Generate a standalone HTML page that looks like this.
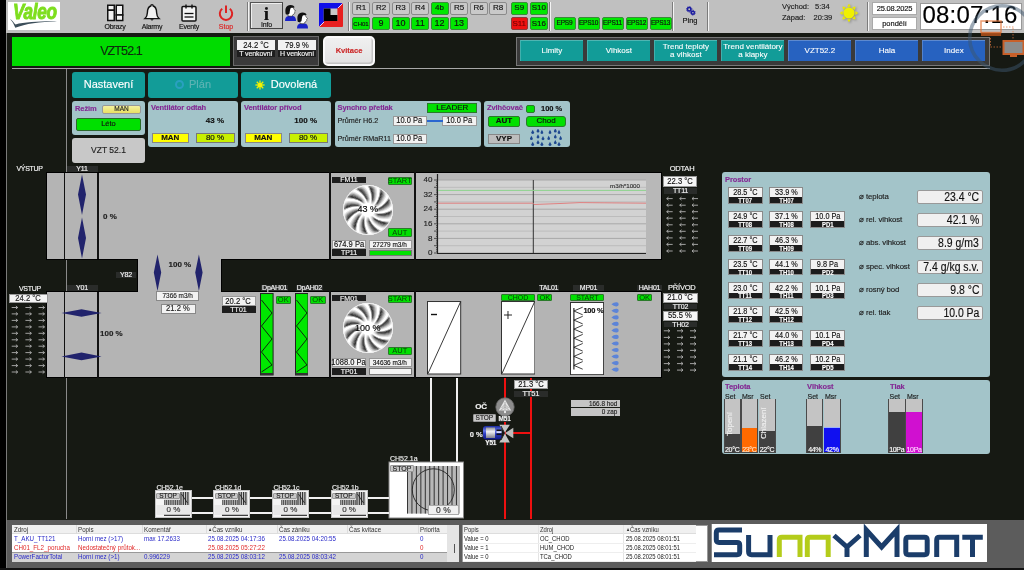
<!DOCTYPE html><html><head><meta charset="utf-8"><style>
*{margin:0;padding:0;box-sizing:border-box}
html,body{width:1024px;height:570px;overflow:hidden;background:#161913;font-family:"Liberation Sans",sans-serif}
.a{position:absolute}
#w{position:absolute;left:0;top:0;width:1024px;height:570px;will-change:transform}
.t,.c,.r{-webkit-text-stroke:0.15px currentColor}
.t{position:absolute;white-space:nowrap;line-height:1}
.c{display:flex;align-items:center;justify-content:center;white-space:nowrap;line-height:1}
.r{display:flex;align-items:center;justify-content:flex-end;white-space:nowrap;line-height:1}
.btn{background:#c9c9c9;border:1px solid #8a8a8a;border-radius:2px;font-size:8px;color:#111}
.gbtn{background:#00e800;border:1px solid #3a8a3a;border-radius:2px;font-size:8px;color:#111}
.rbtn{background:#ee1111;border:1px solid #8a3a3a;border-radius:2px;font-size:8px;color:#700}
.sep{background:#7c7c7c;border-right:1px solid #f4f4f4}
.teal{background:#129c98;border-radius:3px;color:#fff}
.blue{background:#2762c0;color:#fff}
.pnl{background:#a3c4c9;border-radius:3px}
.ptit{color:#842a94;font-weight:bold;font-size:7.5px;letter-spacing:-0.1px}
.val{background:#f2f2f2;border:1px solid #999;color:#111;font-size:7.8px}
.lab{background:#1e1e1e;color:#f4f4f4;font-size:7px}
.dlab{background:#2a2c2a;color:#e8e8e8;font-size:8px}
.ok{background:#00e000;border:1px solid #2a7a2a;border-radius:1px;color:#0a3a0a;font-size:7.5px;-webkit-text-stroke:0 !important}
.duct{background:#b4b4b4}
</style></head><body><div id="w"><div class="a " style="left:0px;top:0px;width:6px;height:570px;background:#000"></div>
<div class="a " style="left:6px;top:33px;width:1px;height:537px;background:#7a7a7a"></div>
<div class="a " style="left:6px;top:0px;width:1018px;height:32.6px;background:#c0c0c0"></div>
<div class="a " style="left:8px;top:2px;width:52px;height:28px;background:#fff"></div>
<div class="t " style="left:12.5px;top:0.5px;font-size:22px;font-weight:bold;font-style:italic;color:#7ede1e;letter-spacing:-0.4px;transform:scaleX(0.78);transform-origin:0 0;-webkit-text-stroke:1px #7ede1e">Valeo</div>
<svg class="a" style="left:8px;top:2px;" width="52" height="28" viewBox="0 0 52 28"><path d="M2 17 C4 18 6 21 7.5 22.5 C17 20 32 19.2 49 19.4 C32 19.8 17 21.5 7.3 25.8 C6 22.5 4.5 19.5 2 17Z" fill="#3c4e5a"/></svg>
<svg class="a" style="left:106px;top:4px;" width="19" height="18" viewBox="0 0 19 18"><g fill="#f2f2f2" stroke="#111" stroke-width="1.5"><rect x="1.75" y="1.25" width="6.5" height="5"/><rect x="1.75" y="6.25" width="6.5" height="10.25"/><rect x="10.25" y="1.25" width="6.5" height="9.75"/><rect x="10.25" y="11" width="6.5" height="5.5"/></g></svg>
<div class="t " style="left:102px;top:22.5px;font-size:7px;color:#111;width:26px;text-align:center;letter-spacing:-0.25px">Obrazy</div>
<svg class="a" style="left:143px;top:3px;" width="18" height="19" viewBox="0 0 18 19"><path d="M9 1.6 C9.9 1.6 10.2 2.2 10.2 3 C12.8 3.8 13.5 6.5 13.6 9.5 C13.7 12.5 14.5 14.3 16 15.6 L2 15.6 C3.5 14.3 4.3 12.5 4.4 9.5 C4.5 6.5 5.2 3.8 7.8 3 C7.8 2.2 8.1 1.6 9 1.6Z" fill="#f0f0f0" stroke="#111" stroke-width="1.4"/><path d="M7.3 16.3 Q9 18.8 10.7 16.3" fill="#111"/></svg>
<div class="t " style="left:139px;top:22.5px;font-size:7px;color:#111;width:26px;text-align:center;letter-spacing:-0.25px">Alarmy</div>
<svg class="a" style="left:180px;top:4px;" width="18" height="18" viewBox="0 0 18 18"><rect x="2" y="2.5" width="14" height="14.5" rx="1" fill="#f4f4f4" stroke="#111" stroke-width="1.5"/><line x1="6" y1="0.5" x2="6" y2="4.5" stroke="#111" stroke-width="1.4"/><line x1="12" y1="0.5" x2="12" y2="4.5" stroke="#111" stroke-width="1.4"/><line x1="4.5" y1="9.5" x2="13.5" y2="9.5" stroke="#111" stroke-width="1.3"/><line x1="4.5" y1="13" x2="13.5" y2="13" stroke="#111" stroke-width="1.3"/></svg>
<div class="t " style="left:176px;top:22.5px;font-size:7px;color:#111;width:26px;text-align:center;letter-spacing:-0.25px">Eventy</div>
<svg class="a" style="left:218px;top:5px;" width="16" height="16" viewBox="0 0 16 16"><path d="M4.2 3.8 A6.2 6.2 0 1 0 11.8 3.8" fill="none" stroke="#dd2222" stroke-width="2"/><line x1="8" y1="0.5" x2="8" y2="8" stroke="#dd2222" stroke-width="2"/></svg>
<div class="t " style="left:213px;top:22.5px;font-size:7px;color:#dd2222;width:26px;text-align:center">Stop</div>
<div class="a sep" style="left:246.5px;top:2px;width:2px;height:28.5px;"></div>
<div class="a sep" style="left:347.8px;top:2px;width:2px;height:28.5px;"></div>
<div class="a sep" style="left:549px;top:2px;width:2px;height:28.5px;"></div>
<div class="a sep" style="left:672px;top:2px;width:2px;height:28.5px;"></div>
<div class="a sep" style="left:707.3px;top:2px;width:2px;height:28.5px;"></div>
<div class="a sep" style="left:867px;top:2px;width:2px;height:28.5px;"></div>
<div class="a " style="left:250px;top:2px;width:33px;height:27px;background:#c6c6c6;border:1px solid #555;border-right-color:#444;border-bottom-color:#444;box-shadow:inset 1px 1px 0 #eee"></div>
<div class="t " style="left:250px;top:4px;font-size:19px;font-weight:bold;color:#111;width:33px;text-align:center;font-family:'Liberation Serif',serif">i</div>
<div class="t " style="left:250px;top:21.3px;font-size:7px;color:#111;width:33px;text-align:center;letter-spacing:-0.2px">Info</div>
<svg class="a" style="left:284px;top:2px;" width="28" height="28" viewBox="0 0 28 28"><g transform="translate(0.5,2.5)"><path d="M0.5 16.5 C0.5 13.5 1.5 12 4 11.5 L8.5 11.5 C10.5 12 11.5 13.5 11.5 16.5Z" fill="#1a22c8"/><path d="M3.5 11.5 L3.5 8 C2.5 7 2.5 4 3.5 3 L8.5 2.5 C9 4 9.5 5 11 6.5 L10.2 7.2 C10.5 8.5 10 9.8 8.5 10 L7.5 11.8Z" fill="#fff" stroke="#222" stroke-width="0.6"/><path d="M1.2 9.5 C0.2 4 1.5 0.5 6 0.5 C8.5 0.5 10 1.5 10 3 L6.5 3.3 C5.5 4.5 5.5 6 5 9 C4 10 2 10.5 1.2 9.5Z" fill="#111"/></g><g transform="translate(12.5,10)"><path d="M0.5 16.5 C0.5 13.5 1.5 12 4 11.5 L8.5 11.5 C10.5 12 11.5 13.5 11.5 16.5Z" fill="#1a22c8"/><path d="M3.5 11.5 L3.5 8 C2.5 7 2.5 4 3.5 3 L8.5 2.5 C9 4 9.5 5 11 6.5 L10.2 7.2 C10.5 8.5 10 9.8 8.5 10 L7.5 11.8Z" fill="#fff" stroke="#222" stroke-width="0.6"/><path d="M1.2 9.5 C0.2 4 1.5 0.5 6 0.5 C8.5 0.5 10 1.5 10 3 L6.5 3.3 C5.5 4.5 5.5 6 5 9 C4 10 2 10.5 1.2 9.5Z" fill="#111"/></g></svg>
<svg class="a" style="left:318px;top:2px;" width="26" height="26" viewBox="0 0 26 26"><path d="M2 1 L24 1 Q25 1 25 2 L25 24 Q25 25 24 25 L2 25 Q1 25 1 24 L1 2 Q1 1 2 1Z" fill="#e82020"/><path d="M2 1 L24.5 1 L1 24.5 L1 2 Q1 1 2 1Z" fill="#1010e8"/><path d="M24.5 1.5 L20 6 M1.5 24.5 L6 20" stroke="#d8d8ff" stroke-width="1"/><rect x="5.7" y="6.5" width="13.7" height="12.5" fill="#c8c8c8"/><path d="M5.7 6.5 L12.5 6.5 L12.5 13 L19.4 13 L19.4 19 L5.7 19Z" fill="#000"/></svg>
<div class="a c btn" style="left:352px;top:2px;width:18px;height:12.5px;">R1</div>
<div class="a c btn" style="left:372px;top:2px;width:18px;height:12.5px;">R2</div>
<div class="a c btn" style="left:391.5px;top:2px;width:18px;height:12.5px;">R3</div>
<div class="a c btn" style="left:411px;top:2px;width:18px;height:12.5px;">R4</div>
<div class="a c gbtn" style="left:430.5px;top:2px;width:18px;height:12.5px;">4b</div>
<div class="a c btn" style="left:450px;top:2px;width:18px;height:12.5px;">R5</div>
<div class="a c btn" style="left:469.5px;top:2px;width:18px;height:12.5px;">R6</div>
<div class="a c btn" style="left:489px;top:2px;width:18px;height:12.5px;">R8</div>
<div class="a c gbtn" style="left:352px;top:17px;width:18px;height:13px;font-size:6px">CH01</div>
<div class="a c gbtn" style="left:372px;top:17px;width:18px;height:13px;font-size:9px">9</div>
<div class="a c gbtn" style="left:391.5px;top:17px;width:18px;height:13px;font-size:9px">10</div>
<div class="a c gbtn" style="left:411px;top:17px;width:18px;height:13px;font-size:9px">11</div>
<div class="a c gbtn" style="left:430.5px;top:17px;width:18px;height:13px;font-size:9px">12</div>
<div class="a c gbtn" style="left:450px;top:17px;width:18px;height:13px;font-size:9px">13</div>
<div class="a c gbtn" style="left:510.5px;top:2px;width:17.5px;height:12.5px;">S9</div>
<div class="a c gbtn" style="left:530px;top:2px;width:17.5px;height:12.5px;">S10</div>
<div class="a c rbtn" style="left:510.5px;top:17px;width:17.5px;height:13px;">S11</div>
<div class="a c gbtn" style="left:530px;top:17px;width:17.5px;height:13px;">S16</div>
<div class="a c gbtn" style="left:553.5px;top:17px;width:22px;height:13px;font-size:6.5px;letter-spacing:-0.2px">EPS9</div>
<div class="a c gbtn" style="left:577.5px;top:17px;width:22px;height:13px;font-size:6.5px;letter-spacing:-0.2px">EPS10</div>
<div class="a c gbtn" style="left:601.5px;top:17px;width:22px;height:13px;font-size:6.5px;letter-spacing:-0.2px">EPS11</div>
<div class="a c gbtn" style="left:625.5px;top:17px;width:22px;height:13px;font-size:6.5px;letter-spacing:-0.2px">EPS12</div>
<div class="a c gbtn" style="left:649.5px;top:17px;width:22px;height:13px;font-size:6.5px;letter-spacing:-0.2px">EPS13</div>
<svg class="a" style="left:684px;top:5px;" width="12" height="12" viewBox="0 0 12 12"><g fill="none" stroke="#1a1aa0"><circle cx="5.2" cy="4.3" r="1.7" stroke-width="1.5"/><circle cx="5.2" cy="4.3" r="2.7" stroke-width="0.9" stroke-dasharray="1 0.7"/><circle cx="8.9" cy="7.7" r="1.5" stroke-width="1.4"/><circle cx="8.9" cy="7.7" r="2.4" stroke-width="0.8" stroke-dasharray="1 0.7"/></g></svg>
<div class="t " style="left:678px;top:16.8px;font-size:7.5px;color:#111;width:24px;text-align:center">Ping</div>
<div class="t " style="left:782px;top:3px;font-size:7.5px;color:#222">Východ:</div>
<div class="t " style="left:815px;top:3px;font-size:7.5px;color:#222">5:34</div>
<div class="t " style="left:782px;top:13.5px;font-size:7.5px;color:#222">Západ:</div>
<div class="t " style="left:813.5px;top:13.5px;font-size:7.5px;color:#222">20:39</div>
<svg class="a" style="left:838.75px;top:3.3px;filter:drop-shadow(1px 1px 1px rgba(0,0,0,0.3))" width="20" height="20" viewBox="0 0 20 20"><path d="M19.30 10.00 L16.31 11.95 L16.31 8.05Z" fill="#e8e800"/><path d="M16.58 16.58 L13.08 15.84 L15.84 13.08Z" fill="#e8e800"/><path d="M10.00 19.30 L8.05 16.31 L11.95 16.31Z" fill="#e8e800"/><path d="M3.42 16.58 L4.16 13.08 L6.92 15.84Z" fill="#e8e800"/><path d="M0.70 10.00 L3.69 8.05 L3.69 11.95Z" fill="#e8e800"/><path d="M3.42 3.42 L6.92 4.16 L4.16 6.92Z" fill="#e8e800"/><path d="M10.00 0.70 L11.95 3.69 L8.05 3.69Z" fill="#e8e800"/><path d="M16.58 3.42 L15.84 6.92 L13.08 4.16Z" fill="#e8e800"/><circle cx="10" cy="10" r="5.6" fill="#f0f000"/></svg>
<div class="a c" style="left:872px;top:2px;width:45px;height:12.5px;background:#fff;border:1px solid #aaa;font-size:7.5px;color:#111;letter-spacing:-0.2px">25.08.2025</div>
<div class="a c" style="left:872px;top:17px;width:45px;height:13px;background:#fff;border:1px solid #aaa;font-size:7.5px;color:#111">pondělí</div>
<div class="a " style="left:919.5px;top:2.5px;width:102px;height:27.5px;background:#fff;border:1px solid #999"></div>
<div class="t " style="left:921px;top:2.8px;font-size:24px;color:#000;width:98px;text-align:center;letter-spacing:0.2px">08:07:16</div>
<div class="a c" style="left:12px;top:37px;width:218px;height:29px;background:#00dc00;font-size:12.5px;color:#0e2a0e;letter-spacing:-0.9px">VZT52.1</div>
<div class="a " style="left:232.5px;top:36px;width:86.5px;height:29.5px;background:#3a3a3a;border:1px solid #6a6a6a"></div>
<div class="a c" style="left:236.5px;top:40px;width:38.5px;height:10px;background:#f2f2f2;font-size:9px;color:#111"><span style="display:inline-block;transform:scaleX(0.85);transform-origin:50% 50%">24.2 °C</span></div>
<div class="a c" style="left:236.5px;top:50px;width:38.5px;height:7px;background:#1e1e1e;font-size:7px;color:#f4f4f4;letter-spacing:-0.1px">T venkovní</div>
<div class="a c" style="left:278px;top:40px;width:38px;height:10px;background:#f2f2f2;font-size:9px;color:#111"><span style="display:inline-block;transform:scaleX(0.85);transform-origin:50% 50%">79.9 %</span></div>
<div class="a c" style="left:278px;top:50px;width:38px;height:7px;background:#1e1e1e;font-size:7px;color:#f4f4f4;letter-spacing:-0.1px">H venkovní</div>
<div class="a c" style="left:323px;top:36px;width:52px;height:29.5px;background:linear-gradient(#f0f0f0,#e2e2e2);border-radius:5px;border:2px solid #fafafa;box-shadow:inset -1.5px -1.5px 0 #c4c4c4;font-size:7.5px;font-weight:bold;color:#cc2828">Kvitace</div>
<div class="a " style="left:516px;top:36.5px;width:473.5px;height:29px;background:#3a3a3a;border:1px solid #777"></div>
<div class="a c" style="left:520px;top:40px;width:62.8px;height:21px;background:#129c98;border-top:1px solid rgba(255,255,255,0.25);border-left:1px solid rgba(255,255,255,0.2);font-size:8px;color:#fff;text-align:center;line-height:8.3px;-webkit-text-stroke:0.1px #fff">Limity</div>
<div class="a c" style="left:587px;top:40px;width:62.8px;height:21px;background:#129c98;border-top:1px solid rgba(255,255,255,0.25);border-left:1px solid rgba(255,255,255,0.2);font-size:8px;color:#fff;text-align:center;line-height:8.3px;-webkit-text-stroke:0.1px #fff">Vlhkost</div>
<div class="a c" style="left:654px;top:40px;width:62.8px;height:21px;background:#129c98;border-top:1px solid rgba(255,255,255,0.25);border-left:1px solid rgba(255,255,255,0.2);font-size:8px;color:#fff;text-align:center;line-height:8.3px;-webkit-text-stroke:0.1px #fff">Trend teploty<br>a vlhkost</div>
<div class="a c" style="left:721px;top:40px;width:62.8px;height:21px;background:#129c98;border-top:1px solid rgba(255,255,255,0.25);border-left:1px solid rgba(255,255,255,0.2);font-size:8px;color:#fff;text-align:center;line-height:8.3px;-webkit-text-stroke:0.1px #fff">Trend ventilátory<br>a klapky</div>
<div class="a c" style="left:788px;top:40px;width:62.8px;height:21px;background:#2762c0;border-top:1px solid rgba(255,255,255,0.25);border-left:1px solid rgba(255,255,255,0.2);font-size:8px;color:#fff;text-align:center;line-height:8.3px;-webkit-text-stroke:0.1px #fff">VZT52.2</div>
<div class="a c" style="left:855px;top:40px;width:62.8px;height:21px;background:#2762c0;border-top:1px solid rgba(255,255,255,0.25);border-left:1px solid rgba(255,255,255,0.2);font-size:8px;color:#fff;text-align:center;line-height:8.3px;-webkit-text-stroke:0.1px #fff">Hala</div>
<div class="a c" style="left:922px;top:40px;width:62.8px;height:21px;background:#2762c0;border-top:1px solid rgba(255,255,255,0.25);border-left:1px solid rgba(255,255,255,0.2);font-size:8px;color:#fff;text-align:center;line-height:8.3px;-webkit-text-stroke:0.1px #fff">Index</div>
<div class="a " style="left:12px;top:67.8px;width:978px;height:1.2px;background:#a8a8a8"></div>
<div class="a " style="left:66px;top:69px;width:1px;height:450px;background:#8a8a8a"></div>
<div class="a c teal" style="left:72px;top:72px;width:73px;height:25.5px;font-size:11px">Nastavení</div>
<div class="a c teal" style="left:148px;top:72px;width:90px;height:25.5px;font-size:11px"><span style="display:inline-block;width:9px;height:9px;border:2px solid #2aa0c0;border-radius:50%;margin-right:5px"></span><span style="color:#5fb4b4">Plán</span></div>
<div class="a c teal" style="left:241px;top:72px;width:90px;height:25.5px;font-size:11px"><svg width="10" height="10" style="margin-right:6px"><line x1="7.50" y1="5.00" x2="9.60" y2="5.00" stroke="#eaf000" stroke-width="1.3"/><line x1="6.77" y1="6.77" x2="8.25" y2="8.25" stroke="#eaf000" stroke-width="1.3"/><line x1="5.00" y1="7.50" x2="5.00" y2="9.60" stroke="#eaf000" stroke-width="1.3"/><line x1="3.23" y1="6.77" x2="1.75" y2="8.25" stroke="#eaf000" stroke-width="1.3"/><line x1="2.50" y1="5.00" x2="0.40" y2="5.00" stroke="#eaf000" stroke-width="1.3"/><line x1="3.23" y1="3.23" x2="1.75" y2="1.75" stroke="#eaf000" stroke-width="1.3"/><line x1="5.00" y1="2.50" x2="5.00" y2="0.40" stroke="#eaf000" stroke-width="1.3"/><line x1="6.77" y1="3.23" x2="8.25" y2="1.75" stroke="#eaf000" stroke-width="1.3"/><circle cx="5" cy="5" r="2.6" fill="#f4f400"/></svg>Dovolená</div>
<div class="a pnl" style="left:72px;top:101px;width:73px;height:33.5px;"></div>
<div class="t ptit" style="left:75px;top:104.5px;">Režim</div>
<div class="a c" style="left:102px;top:105.4px;width:39px;height:8.2px;background:linear-gradient(#f6f2a0,#e8e060);border:1px solid #999;border-radius:2px;font-size:6.5px;color:#222">MAN</div>
<div class="a c" style="left:76px;top:117.5px;width:65px;height:13px;background:#00e000;border:1px solid #2a6a2a;border-radius:2px;font-size:7.5px;color:#111">Léto</div>
<div class="a c" style="left:72px;top:138px;width:73px;height:24.5px;background:#c8c8c8;border-radius:3px;font-size:8.5px;color:#222">VZT 52.1</div>
<div class="a pnl" style="left:148px;top:101px;width:90px;height:46px;"></div>
<div class="t ptit" style="left:151px;top:104px;">Ventilátor odtah</div>
<div class="a r" style="left:188px;top:116px;width:36px;height:10px;font-size:8px;font-weight:bold;color:#111">43 %</div>
<div class="a c" style="left:152px;top:133px;width:36.5px;height:10px;background:#ffff00;border:1px solid #888;font-size:8px;font-weight:bold;color:#111">MAN</div>
<div class="a c" style="left:195.5px;top:133px;width:39px;height:10px;background:#c8f000;border:1px solid #777;font-size:8px;color:#111">80 %</div>
<div class="a pnl" style="left:241px;top:101px;width:90px;height:46px;"></div>
<div class="t ptit" style="left:244px;top:104px;">Ventilátor přívod</div>
<div class="a r" style="left:281px;top:116px;width:36px;height:10px;font-size:8px;font-weight:bold;color:#111">100 %</div>
<div class="a c" style="left:245px;top:133px;width:36.5px;height:10px;background:#ffff00;border:1px solid #888;font-size:8px;font-weight:bold;color:#111">MAN</div>
<div class="a c" style="left:288.5px;top:133px;width:39px;height:10px;background:#c8f000;border:1px solid #777;font-size:8px;color:#111">80 %</div>
<div class="a pnl" style="left:335px;top:101px;width:145.5px;height:46px;"></div>
<div class="t ptit" style="left:337.5px;top:103.5px;">Synchro přetlak</div>
<div class="a c" style="left:427.3px;top:102.8px;width:50px;height:10.7px;background:#00e000;border:1px solid #2a7a2a;font-size:8px;color:#111">LEADER</div>
<div class="t " style="left:337.5px;top:117.3px;font-size:7.2px;color:#222">Průměr H6.2</div>
<div class="t " style="left:337.5px;top:134.8px;font-size:7.2px;color:#222">Průměr RMaR11</div>
<div class="a c val" style="left:392.6px;top:115.5px;width:34px;height:10.7px;font-size:8.8px"><span style="display:inline-block;transform:scaleX(0.85);transform-origin:50% 50%">10.0 Pa</span></div>
<div class="a c val" style="left:442.4px;top:115.5px;width:34.3px;height:10.7px;font-size:8.8px"><span style="display:inline-block;transform:scaleX(0.85);transform-origin:50% 50%">10.0 Pa</span></div>
<div class="a " style="left:426.5px;top:119.5px;width:16px;height:2.5px;background:#2a66d0"></div>
<div class="a c val" style="left:392.6px;top:133.5px;width:34px;height:10px;font-size:8.8px"><span style="display:inline-block;transform:scaleX(0.85);transform-origin:50% 50%">10.0 Pa</span></div>
<div class="a pnl" style="left:484px;top:101px;width:85.5px;height:46px;"></div>
<div class="t ptit" style="left:487px;top:103.5px;">Zvlhčovač</div>
<div class="a " style="left:526.4px;top:104.8px;width:9px;height:8.7px;background:#00e000;border:1px solid #2a7a2a;border-radius:2px"></div>
<div class="t " style="left:541px;top:105px;font-size:7.5px;font-weight:bold;color:#111">100 %</div>
<div class="a c" style="left:488px;top:115.5px;width:32px;height:11px;background:#00e000;border:1px solid #2a7a2a;border-radius:2px;font-size:8px;font-weight:bold;color:#111">AUT</div>
<div class="a c" style="left:526.4px;top:115.5px;width:39.5px;height:11px;background:#00e000;border:1px solid #2a7a2a;border-radius:3px;font-size:8px;color:#111">Chod</div>
<div class="a c" style="left:488px;top:133.7px;width:32px;height:10px;background:#bdbdbd;border:1px solid #888;font-size:8px;font-weight:bold;color:#111">VYP</div>
<svg class="a" style="left:530px;top:129px;" width="33" height="18" viewBox="0 0 33 18"><path d="M2.7 0.7999999999999998 L1.4000000000000001 3.3 A1.35 1.35 0 1 0 4.0 3.3Z" fill="#1e4890"/><path d="M8 -0.7000000000000002 L6.7 1.8 A1.35 1.35 0 1 0 9.3 1.8Z" fill="#1e4890"/><path d="M11.9 0.7999999999999998 L10.6 3.3 A1.35 1.35 0 1 0 13.200000000000001 3.3Z" fill="#1e4890"/><path d="M1.4 6.8 L0.09999999999999987 9.3 A1.35 1.35 0 1 0 2.7 9.3Z" fill="#1e4890"/><path d="M8 5.2 L6.7 7.7 A1.35 1.35 0 1 0 9.3 7.7Z" fill="#1e4890"/><path d="M13 6.999999999999999 L11.7 9.5 A1.35 1.35 0 1 0 14.3 9.5Z" fill="#1e4890"/><path d="M2.7 12.7 L1.4000000000000001 15.200000000000001 A1.35 1.35 0 1 0 4.0 15.200000000000001Z" fill="#1e4890"/><path d="M8 10.899999999999999 L6.7 13.4 A1.35 1.35 0 1 0 9.3 13.4Z" fill="#1e4890"/><path d="M11.9 12.7 L10.6 15.200000000000001 A1.35 1.35 0 1 0 13.200000000000001 15.200000000000001Z" fill="#1e4890"/><path d="M20 0.7999999999999998 L18.7 3.3 A1.35 1.35 0 1 0 21.3 3.3Z" fill="#1e4890"/><path d="M25.3 -0.7000000000000002 L24.0 1.8 A1.35 1.35 0 1 0 26.6 1.8Z" fill="#1e4890"/><path d="M29 0.7999999999999998 L27.7 3.3 A1.35 1.35 0 1 0 30.3 3.3Z" fill="#1e4890"/><path d="M18.7 6.8 L17.4 9.3 A1.35 1.35 0 1 0 20.0 9.3Z" fill="#1e4890"/><path d="M25.3 5.2 L24.0 7.7 A1.35 1.35 0 1 0 26.6 7.7Z" fill="#1e4890"/><path d="M30.6 6.8 L29.3 9.3 A1.35 1.35 0 1 0 31.900000000000002 9.3Z" fill="#1e4890"/><path d="M20 12.7 L18.7 15.200000000000001 A1.35 1.35 0 1 0 21.3 15.200000000000001Z" fill="#1e4890"/><path d="M25.3 10.899999999999999 L24.0 13.4 A1.35 1.35 0 1 0 26.6 13.4Z" fill="#1e4890"/><path d="M29 12.7 L27.7 15.200000000000001 A1.35 1.35 0 1 0 30.3 15.200000000000001Z" fill="#1e4890"/></svg>
<div class="a " style="left:45.5px;top:172px;width:616.5px;height:88px;background:#b4b4b4;border:1px solid #000"></div>
<div class="a " style="left:45.5px;top:290.5px;width:616.5px;height:87.5px;background:#b4b4b4;border:1px solid #000"></div>
<div class="a " style="left:137px;top:258px;width:84px;height:34px;background:#b4b4b4"></div>
<div class="a " style="left:45.5px;top:258.5px;width:92.5px;height:33px;border:1px solid #000;border-left:none"></div>
<div class="a " style="left:220.5px;top:258.5px;width:441.5px;height:33px;border:1px solid #000;border-right:none"></div>
<div class="t " style="left:16.5px;top:165.3px;font-size:7px;color:#f4f4f4;letter-spacing:-0.3px">VÝSTUP</div>
<div class="a c" style="left:66.5px;top:165.5px;width:31px;height:6px;background:#2a2c2a;color:#f4f4f4;font-size:7px;letter-spacing:-0.2px;">Y11</div>
<div class="t " style="left:19px;top:284.5px;font-size:7px;color:#f4f4f4;letter-spacing:-0.3px">VSTUP</div>
<div class="a c" style="left:66.5px;top:284.5px;width:31px;height:6px;background:#2a2c2a;color:#f4f4f4;font-size:7px;letter-spacing:-0.2px;">Y01</div>
<div class="a c" style="left:116px;top:271.5px;width:20px;height:6px;background:#2a2c2a;color:#f4f4f4;font-size:7px;letter-spacing:-0.2px;">Y82</div>
<div class="a " style="left:63.7px;top:173px;width:1.6px;height:86px;background:#111"></div>
<div class="a " style="left:97.2px;top:173px;width:1.6px;height:86px;background:#111"></div>
<div class="a " style="left:63.7px;top:291.5px;width:1.6px;height:86px;background:#111"></div>
<div class="a " style="left:97.2px;top:291.5px;width:1.6px;height:86px;background:#111"></div>
<svg class="a" style="left:77px;top:173.5px;" width="10" height="85" viewBox="0 0 10 85"><path d="M5 0.5 L9 20.5 L5 41 L1 20.5Z M5 43.5 L9 64 L5 84.5 L1 64Z" fill="#21236c"/></svg>
<div class="t " style="left:103px;top:213px;font-size:8px;font-weight:bold;color:#222">0 %</div>
<svg class="a" style="left:61px;top:308px;" width="41" height="53" viewBox="0 0 41 53"><path d="M0.5 5 L20.5 1.2 L40.5 5 L20.5 8.8Z M0.5 48.4 L20.5 44.6 L40.5 48.4 L20.5 52.2Z" fill="#21236c"/></svg>
<div class="t " style="left:100px;top:329.5px;font-size:8px;font-weight:bold;color:#222">100 %</div>
<svg class="a" style="left:153px;top:253.5px;" width="50" height="38" viewBox="0 0 50 38"><path d="M4.5 0.5 L8.2 18.5 L4.5 37 L0.8 18.5Z M45.9 0.5 L49.6 18.5 L45.9 37 L42.2 18.5Z" fill="#21236c"/></svg>
<div class="t " style="left:168.5px;top:260.5px;font-size:8px;font-weight:bold;color:#222">100 %</div>
<div class="a c" style="left:156.4px;top:291.2px;width:43px;height:10px;background:#f2f2f2;border:1px solid #888;font-size:7.5px;color:#222"><span style="display:inline-block;transform:scaleX(0.86);transform-origin:50% 50%">7366 m3/h</span></div>
<div class="a c" style="left:160.6px;top:303.8px;width:35px;height:10.2px;background:#f2f2f2;border:1px solid #888;font-size:9px;color:#222"><span style="display:inline-block;transform:scaleX(0.85);transform-origin:50% 50%">21.2 %</span></div>
<div class="a c" style="left:9.2px;top:293.5px;width:38.6px;height:9.2px;background:#f4f4f4;border:1px solid #999;font-size:9px;color:#222"><span style="display:inline-block;transform:scaleX(0.85);transform-origin:50% 50%">24.2 °C</span></div>
<svg class="a" style="left:0px;top:0px;pointer-events:none" width="1024" height="570" viewBox="0 0 1024 570"><g stroke="#b0b0b0" stroke-width="0.9" fill="none"><path d="M11.7 307.5 L17.7 307.5 M17.7 307.5 L15.9 306.0 M17.7 307.5 L15.9 309.0 M25.4 307.5 L31.4 307.5 M31.4 307.5 L29.6 306.0 M31.4 307.5 L29.6 309.0 M38.5 307.5 L44.5 307.5 M44.5 307.5 L42.7 306.0 M44.5 307.5 L42.7 309.0 M11.7 313.9 L17.7 313.9 M17.7 313.9 L15.9 312.4 M17.7 313.9 L15.9 315.4 M25.4 313.9 L31.4 313.9 M31.4 313.9 L29.6 312.4 M31.4 313.9 L29.6 315.4 M38.5 313.9 L44.5 313.9 M44.5 313.9 L42.7 312.4 M44.5 313.9 L42.7 315.4 M11.7 320.4 L17.7 320.4 M17.7 320.4 L15.9 318.9 M17.7 320.4 L15.9 321.9 M25.4 320.4 L31.4 320.4 M31.4 320.4 L29.6 318.9 M31.4 320.4 L29.6 321.9 M38.5 320.4 L44.5 320.4 M44.5 320.4 L42.7 318.9 M44.5 320.4 L42.7 321.9 M11.7 326.9 L17.7 326.9 M17.7 326.9 L15.9 325.4 M17.7 326.9 L15.9 328.4 M25.4 326.9 L31.4 326.9 M31.4 326.9 L29.6 325.4 M31.4 326.9 L29.6 328.4 M38.5 326.9 L44.5 326.9 M44.5 326.9 L42.7 325.4 M44.5 326.9 L42.7 328.4 M11.7 333.3 L17.7 333.3 M17.7 333.3 L15.9 331.8 M17.7 333.3 L15.9 334.8 M25.4 333.3 L31.4 333.3 M31.4 333.3 L29.6 331.8 M31.4 333.3 L29.6 334.8 M38.5 333.3 L44.5 333.3 M44.5 333.3 L42.7 331.8 M44.5 333.3 L42.7 334.8 M11.7 339.8 L17.7 339.8 M17.7 339.8 L15.9 338.2 M17.7 339.8 L15.9 341.2 M25.4 339.8 L31.4 339.8 M31.4 339.8 L29.6 338.2 M31.4 339.8 L29.6 341.2 M38.5 339.8 L44.5 339.8 M44.5 339.8 L42.7 338.2 M44.5 339.8 L42.7 341.2 M11.7 346.2 L17.7 346.2 M17.7 346.2 L15.9 344.7 M17.7 346.2 L15.9 347.7 M25.4 346.2 L31.4 346.2 M31.4 346.2 L29.6 344.7 M31.4 346.2 L29.6 347.7 M38.5 346.2 L44.5 346.2 M44.5 346.2 L42.7 344.7 M44.5 346.2 L42.7 347.7 M11.7 352.6 L17.7 352.6 M17.7 352.6 L15.9 351.1 M17.7 352.6 L15.9 354.1 M25.4 352.6 L31.4 352.6 M31.4 352.6 L29.6 351.1 M31.4 352.6 L29.6 354.1 M38.5 352.6 L44.5 352.6 M44.5 352.6 L42.7 351.1 M44.5 352.6 L42.7 354.1 M11.7 359.1 L17.7 359.1 M17.7 359.1 L15.9 357.6 M17.7 359.1 L15.9 360.6 M25.4 359.1 L31.4 359.1 M31.4 359.1 L29.6 357.6 M31.4 359.1 L29.6 360.6 M38.5 359.1 L44.5 359.1 M44.5 359.1 L42.7 357.6 M44.5 359.1 L42.7 360.6 M11.7 365.6 L17.7 365.6 M17.7 365.6 L15.9 364.1 M17.7 365.6 L15.9 367.1 M25.4 365.6 L31.4 365.6 M31.4 365.6 L29.6 364.1 M31.4 365.6 L29.6 367.1 M38.5 365.6 L44.5 365.6 M44.5 365.6 L42.7 364.1 M44.5 365.6 L42.7 367.1 M11.7 372.0 L17.7 372.0 M17.7 372.0 L15.9 370.5 M17.7 372.0 L15.9 373.5 M25.4 372.0 L31.4 372.0 M31.4 372.0 L29.6 370.5 M31.4 372.0 L29.6 373.5 M38.5 372.0 L44.5 372.0 M44.5 372.0 L42.7 370.5 M44.5 372.0 L42.7 373.5 "/><path d="M663.8 330.8 L669.8 330.8 M669.8 330.8 L668.0 329.3 M669.8 330.8 L668.0 332.3 M677.0 330.8 L683.0 330.8 M683.0 330.8 L681.2 329.3 M683.0 330.8 L681.2 332.3 M690.0 330.8 L696.0 330.8 M696.0 330.8 L694.2 329.3 M696.0 330.8 L694.2 332.3 M663.8 337.4 L669.8 337.4 M669.8 337.4 L668.0 335.9 M669.8 337.4 L668.0 338.9 M677.0 337.4 L683.0 337.4 M683.0 337.4 L681.2 335.9 M683.0 337.4 L681.2 338.9 M690.0 337.4 L696.0 337.4 M696.0 337.4 L694.2 335.9 M696.0 337.4 L694.2 338.9 M663.8 343.9 L669.8 343.9 M669.8 343.9 L668.0 342.4 M669.8 343.9 L668.0 345.4 M677.0 343.9 L683.0 343.9 M683.0 343.9 L681.2 342.4 M683.0 343.9 L681.2 345.4 M690.0 343.9 L696.0 343.9 M696.0 343.9 L694.2 342.4 M696.0 343.9 L694.2 345.4 M663.8 350.4 L669.8 350.4 M669.8 350.4 L668.0 348.9 M669.8 350.4 L668.0 351.9 M677.0 350.4 L683.0 350.4 M683.0 350.4 L681.2 348.9 M683.0 350.4 L681.2 351.9 M690.0 350.4 L696.0 350.4 M696.0 350.4 L694.2 348.9 M696.0 350.4 L694.2 351.9 M663.8 357.0 L669.8 357.0 M669.8 357.0 L668.0 355.5 M669.8 357.0 L668.0 358.5 M677.0 357.0 L683.0 357.0 M683.0 357.0 L681.2 355.5 M683.0 357.0 L681.2 358.5 M690.0 357.0 L696.0 357.0 M696.0 357.0 L694.2 355.5 M696.0 357.0 L694.2 358.5 M663.8 363.6 L669.8 363.6 M669.8 363.6 L668.0 362.1 M669.8 363.6 L668.0 365.1 M677.0 363.6 L683.0 363.6 M683.0 363.6 L681.2 362.1 M683.0 363.6 L681.2 365.1 M690.0 363.6 L696.0 363.6 M696.0 363.6 L694.2 362.1 M696.0 363.6 L694.2 365.1 M663.8 370.1 L669.8 370.1 M669.8 370.1 L668.0 368.6 M669.8 370.1 L668.0 371.6 M677.0 370.1 L683.0 370.1 M683.0 370.1 L681.2 368.6 M683.0 370.1 L681.2 371.6 M690.0 370.1 L696.0 370.1 M696.0 370.1 L694.2 368.6 M696.0 370.1 L694.2 371.6 "/><path d="M666.7 198.6 L672.7 198.6 M666.7 198.6 L668.5 197.1 M666.7 198.6 L668.5 200.1 M679.7 198.6 L685.7 198.6 M679.7 198.6 L681.5 197.1 M679.7 198.6 L681.5 200.1 M692.0 198.6 L698.0 198.6 M692.0 198.6 L693.8 197.1 M692.0 198.6 L693.8 200.1 M666.7 205.2 L672.7 205.2 M666.7 205.2 L668.5 203.7 M666.7 205.2 L668.5 206.7 M679.7 205.2 L685.7 205.2 M679.7 205.2 L681.5 203.7 M679.7 205.2 L681.5 206.7 M692.0 205.2 L698.0 205.2 M692.0 205.2 L693.8 203.7 M692.0 205.2 L693.8 206.7 M666.7 211.7 L672.7 211.7 M666.7 211.7 L668.5 210.2 M666.7 211.7 L668.5 213.2 M679.7 211.7 L685.7 211.7 M679.7 211.7 L681.5 210.2 M679.7 211.7 L681.5 213.2 M692.0 211.7 L698.0 211.7 M692.0 211.7 L693.8 210.2 M692.0 211.7 L693.8 213.2 M666.7 218.2 L672.7 218.2 M666.7 218.2 L668.5 216.8 M666.7 218.2 L668.5 219.8 M679.7 218.2 L685.7 218.2 M679.7 218.2 L681.5 216.8 M679.7 218.2 L681.5 219.8 M692.0 218.2 L698.0 218.2 M692.0 218.2 L693.8 216.8 M692.0 218.2 L693.8 219.8 M666.7 224.8 L672.7 224.8 M666.7 224.8 L668.5 223.3 M666.7 224.8 L668.5 226.3 M679.7 224.8 L685.7 224.8 M679.7 224.8 L681.5 223.3 M679.7 224.8 L681.5 226.3 M692.0 224.8 L698.0 224.8 M692.0 224.8 L693.8 223.3 M692.0 224.8 L693.8 226.3 M666.7 231.3 L672.7 231.3 M666.7 231.3 L668.5 229.8 M666.7 231.3 L668.5 232.8 M679.7 231.3 L685.7 231.3 M679.7 231.3 L681.5 229.8 M679.7 231.3 L681.5 232.8 M692.0 231.3 L698.0 231.3 M692.0 231.3 L693.8 229.8 M692.0 231.3 L693.8 232.8 M666.7 237.9 L672.7 237.9 M666.7 237.9 L668.5 236.4 M666.7 237.9 L668.5 239.4 M679.7 237.9 L685.7 237.9 M679.7 237.9 L681.5 236.4 M679.7 237.9 L681.5 239.4 M692.0 237.9 L698.0 237.9 M692.0 237.9 L693.8 236.4 M692.0 237.9 L693.8 239.4 M666.7 244.4 L672.7 244.4 M666.7 244.4 L668.5 242.9 M666.7 244.4 L668.5 245.9 M679.7 244.4 L685.7 244.4 M679.7 244.4 L681.5 242.9 M679.7 244.4 L681.5 245.9 M692.0 244.4 L698.0 244.4 M692.0 244.4 L693.8 242.9 M692.0 244.4 L693.8 245.9 M666.7 251.0 L672.7 251.0 M666.7 251.0 L668.5 249.5 M666.7 251.0 L668.5 252.5 M679.7 251.0 L685.7 251.0 M679.7 251.0 L681.5 249.5 M679.7 251.0 L681.5 252.5 M692.0 251.0 L698.0 251.0 M692.0 251.0 L693.8 249.5 M692.0 251.0 L693.8 252.5 "/></g></svg>
<div class="a c val" style="left:221.5px;top:296px;width:34px;height:10px;font-size:9px"><span style="display:inline-block;transform:scaleX(0.85);transform-origin:50% 50%">20.2 °C</span></div>
<div class="a c lab" style="left:221.5px;top:306px;width:34px;height:6.5px;">TT01</div>
<div class="a c" style="left:261.2px;top:284.8px;width:27px;height:6px;background:#2a2c2a;color:#f4f4f4;font-size:7px;letter-spacing:-0.2px;">DpAH01</div>
<svg class="a" style="left:260.2px;top:293px;" width="13.6" height="82.5" viewBox="0 0 13.6 82.5"><rect x="0.5" y="0.5" width="12.6" height="81.5" fill="#00e800" stroke="#222" stroke-width="1"/><rect x="0.5" y="80" width="12.6" height="2" fill="#333"/><path d="M1.5 7 L12 20 L1.5 33 L12 46 L1.5 59 L12 72 L1.5 79" fill="none" stroke="#111" stroke-width="0.9"/></svg>
<div class="a c ok" style="left:275.5px;top:296px;width:15.5px;height:8px;">OK</div>
<div class="a c" style="left:295.8px;top:284.8px;width:27px;height:6px;background:#2a2c2a;color:#f4f4f4;font-size:7px;letter-spacing:-0.2px;">DpAH02</div>
<svg class="a" style="left:294.8px;top:293px;" width="13.6" height="82.5" viewBox="0 0 13.6 82.5"><rect x="0.5" y="0.5" width="12.6" height="81.5" fill="#00e800" stroke="#222" stroke-width="1"/><rect x="0.5" y="80" width="12.6" height="2" fill="#333"/><path d="M1.5 7 L12 20 L1.5 33 L12 46 L1.5 59 L12 72 L1.5 79" fill="none" stroke="#111" stroke-width="0.9"/></svg>
<div class="a c ok" style="left:310px;top:296px;width:15.5px;height:8px;">OK</div>
<div class="a " style="left:329px;top:172px;width:2px;height:88px;background:#111"></div>
<div class="a " style="left:414px;top:172px;width:2px;height:88px;background:#111"></div>
<div class="a c lab" style="left:332px;top:176.5px;width:34px;height:6px;">FM11</div>
<div class="a c ok" style="left:388px;top:176.5px;width:23.6px;height:8px;">START</div>
<svg class="a" style="left:341.7px;top:183.5px;" width="52" height="52" viewBox="0 0 52 52"><defs><radialGradient id="fw" cx="50%" cy="50%" r="50%"><stop offset="0" stop-color="#fff" stop-opacity="1"/><stop offset="0.26" stop-color="#fff" stop-opacity="1"/><stop offset="0.46" stop-color="#fff" stop-opacity="0"/><stop offset="0.85" stop-color="#fff" stop-opacity="0"/><stop offset="1" stop-color="#fff" stop-opacity="0.55"/></radialGradient><g id="blade"><path d="M30.0 25.4 L33.3 24.2 L36.4 22.3 L39.2 19.9 L41.6 17.0 L43.6 13.6 L45.0 9.8 L43.6 8.2 L42.5 12.2 L40.8 15.7 L38.6 18.9 L36.0 21.5 L33.1 23.6 L29.9 25.0Z" fill="rgb(224,224,224)"/><path d="M29.9 25.1 L33.1 23.7 L36.1 21.7 L38.8 19.1 L41.0 16.0 L42.7 12.5 L43.9 8.6 L42.4 7.2 L41.6 11.2 L40.1 14.8 L38.1 18.1 L35.7 20.9 L32.9 23.1 L29.8 24.8Z" fill="rgb(183,183,183)"/><path d="M29.8 24.9 L33.0 23.3 L35.8 21.1 L38.3 18.3 L40.3 15.1 L41.9 11.5 L42.8 7.5 L41.3 6.3 L40.7 10.3 L39.4 14.0 L37.7 17.4 L35.4 20.3 L32.7 22.7 L29.7 24.6Z" fill="rgb(140,140,140)"/><path d="M29.8 24.7 L32.8 22.9 L35.5 20.5 L37.8 17.6 L39.7 14.3 L41.0 10.6 L41.7 6.6 L40.3 5.5 L39.8 9.6 L38.8 13.3 L37.2 16.8 L35.1 19.8 L32.6 22.4 L29.7 24.4Z" fill="rgb(102,102,102)"/><path d="M29.7 24.5 L32.6 22.5 L35.2 20.0 L37.4 17.0 L39.1 13.6 L40.2 9.8 L40.7 5.8 L39.3 4.8 L39.1 8.9 L38.2 12.8 L36.8 16.3 L34.8 19.4 L32.4 22.1 L29.6 24.2Z" fill="rgb(68,68,68)"/><path d="M29.6 24.3 L32.5 22.2 L34.9 19.6 L37.0 16.5 L38.5 13.0 L39.4 9.2 L39.7 5.1 L38.5 4.4 L38.4 8.5 L37.7 12.3 L36.4 15.9 L34.6 19.1 L32.2 21.8 L29.5 24.1Z" fill="rgb(43,43,43)"/><path d="M29.6 24.2 L32.3 22.0 L34.7 19.3 L36.6 16.1 L38.0 12.6 L38.8 8.7 L38.9 4.6 L37.9 4.0 L38.0 8.1 L37.3 12.0 L36.1 15.6 L34.4 18.9 L32.1 21.7 L29.5 24.0Z" fill="rgb(76,76,76)"/><path d="M29.5 24.1 L32.2 21.8 L34.5 19.0 L36.3 15.8 L37.6 12.2 L38.3 8.4 L38.4 4.3 L37.5 3.8 L37.6 7.9 L37.0 11.8 L35.9 15.4 L34.2 18.7 L32.0 21.5 L29.4 23.9Z" fill="rgb(178,178,178)"/></g></defs><clipPath id="fc26_147"><circle cx="26" cy="26" r="25"/></clipPath><circle cx="26" cy="26" r="25" fill="#fff"/><g clip-path="url(#fc26_147)"><use href="#blade" transform="rotate(0 26 26)"/><use href="#blade" transform="rotate(30 26 26)"/><use href="#blade" transform="rotate(60 26 26)"/><use href="#blade" transform="rotate(90 26 26)"/><use href="#blade" transform="rotate(120 26 26)"/><use href="#blade" transform="rotate(150 26 26)"/><use href="#blade" transform="rotate(180 26 26)"/><use href="#blade" transform="rotate(210 26 26)"/><use href="#blade" transform="rotate(240 26 26)"/><use href="#blade" transform="rotate(270 26 26)"/><use href="#blade" transform="rotate(300 26 26)"/><use href="#blade" transform="rotate(330 26 26)"/></g><circle cx="26" cy="26" r="25" fill="url(#fw)"/><circle cx="26" cy="26" r="24.6" fill="none" stroke="#f4f4f4" stroke-width="1"/></svg>
<div class="t " style="left:341.7px;top:205px;width:52px;text-align:center;font-size:9px;color:#000">43 %</div>
<div class="a c ok" style="left:388px;top:228px;width:23.6px;height:8.6px;">AUT</div>
<div class="a c val" style="left:332px;top:239.6px;width:34px;height:9.4px;font-size:9px"><span style="display:inline-block;transform:scaleX(0.84);transform-origin:50% 50%">674.9 Pa</span></div>
<div class="a c lab" style="left:332px;top:249px;width:34px;height:7px;">TP11</div>
<div class="a c val" style="left:369px;top:239.6px;width:42.6px;height:9.4px;font-size:7.5px"><span style="display:inline-block;transform:scaleX(0.86);transform-origin:50% 50%">27279 m3/h</span></div>
<div class="a " style="left:369px;top:249.8px;width:42.6px;height:6.4px;background:#00e000;border:1px solid #777"></div>
<div class="a " style="left:329px;top:290.5px;width:2px;height:88px;background:#111"></div>
<div class="a " style="left:414px;top:290.5px;width:2px;height:88px;background:#111"></div>
<div class="a c lab" style="left:332px;top:295px;width:34px;height:6px;">FM01</div>
<div class="a c ok" style="left:388px;top:295px;width:23.6px;height:8px;">START</div>
<svg class="a" style="left:341.7px;top:302px;" width="52" height="52" viewBox="0 0 52 52"><clipPath id="fc26_158"><circle cx="26" cy="26" r="25"/></clipPath><circle cx="26" cy="26" r="25" fill="#fff"/><g clip-path="url(#fc26_158)"><use href="#blade" transform="rotate(0 26 26)"/><use href="#blade" transform="rotate(30 26 26)"/><use href="#blade" transform="rotate(60 26 26)"/><use href="#blade" transform="rotate(90 26 26)"/><use href="#blade" transform="rotate(120 26 26)"/><use href="#blade" transform="rotate(150 26 26)"/><use href="#blade" transform="rotate(180 26 26)"/><use href="#blade" transform="rotate(210 26 26)"/><use href="#blade" transform="rotate(240 26 26)"/><use href="#blade" transform="rotate(270 26 26)"/><use href="#blade" transform="rotate(300 26 26)"/><use href="#blade" transform="rotate(330 26 26)"/></g><circle cx="26" cy="26" r="25" fill="url(#fw)"/><circle cx="26" cy="26" r="24.6" fill="none" stroke="#f4f4f4" stroke-width="1"/></svg>
<div class="t " style="left:341.7px;top:323.5px;width:52px;text-align:center;font-size:9px;color:#000">100 %</div>
<div class="a c ok" style="left:388px;top:346.5px;width:23.6px;height:8.6px;">AUT</div>
<div class="a c val" style="left:332px;top:358.1px;width:34px;height:9.4px;font-size:9px"><span style="display:inline-block;transform:scaleX(0.84);transform-origin:50% 50%">1088.0 Pa</span></div>
<div class="a c lab" style="left:332px;top:367.5px;width:34px;height:7px;">TP01</div>
<div class="a c val" style="left:369px;top:358.1px;width:42.6px;height:9.4px;font-size:7.5px"><span style="display:inline-block;transform:scaleX(0.86);transform-origin:50% 50%">34636 m3/h</span></div>
<div class="a " style="left:369px;top:368.3px;width:42.6px;height:6.4px;background:#f4f4f4;border:1px solid #777"></div>
<div class="a " style="left:416px;top:173px;width:245px;height:86px;background:#b8b8b8"></div>
<div class="a " style="left:438px;top:180px;width:208px;height:73px;background:#d2d2d2"></div>
<svg class="a" style="left:0px;top:0px;pointer-events:none" width="1024" height="570" viewBox="0 0 1024 570"><line x1="438" y1="180.0" x2="646" y2="180.0" stroke="#a8a8a8" stroke-width="1"/><line x1="438" y1="187.3" x2="646" y2="187.3" stroke="#bcbcbc" stroke-width="1"/><line x1="438" y1="194.6" x2="646" y2="194.6" stroke="#a8a8a8" stroke-width="1"/><line x1="438" y1="201.9" x2="646" y2="201.9" stroke="#bcbcbc" stroke-width="1"/><line x1="438" y1="209.2" x2="646" y2="209.2" stroke="#a8a8a8" stroke-width="1"/><line x1="438" y1="216.5" x2="646" y2="216.5" stroke="#bcbcbc" stroke-width="1"/><line x1="438" y1="223.8" x2="646" y2="223.8" stroke="#a8a8a8" stroke-width="1"/><line x1="438" y1="231.1" x2="646" y2="231.1" stroke="#bcbcbc" stroke-width="1"/><line x1="438" y1="238.4" x2="646" y2="238.4" stroke="#a8a8a8" stroke-width="1"/><line x1="438" y1="245.7" x2="646" y2="245.7" stroke="#bcbcbc" stroke-width="1"/><line x1="438" y1="253.0" x2="646" y2="253.0" stroke="#a8a8a8" stroke-width="1"/><line x1="437.5" y1="174" x2="437.5" y2="253.5" stroke="#222" stroke-width="1.2"/><line x1="437" y1="253.5" x2="646" y2="253.5" stroke="#222" stroke-width="1.2"/><line x1="434" y1="253.0" x2="438" y2="253.0" stroke="#222" stroke-width="0.7"/><line x1="436" y1="251.2" x2="438" y2="251.2" stroke="#222" stroke-width="0.7"/><line x1="436" y1="249.3" x2="438" y2="249.3" stroke="#222" stroke-width="0.7"/><line x1="436" y1="247.5" x2="438" y2="247.5" stroke="#222" stroke-width="0.7"/><line x1="434" y1="245.7" x2="438" y2="245.7" stroke="#222" stroke-width="0.7"/><line x1="436" y1="243.9" x2="438" y2="243.9" stroke="#222" stroke-width="0.7"/><line x1="436" y1="242.1" x2="438" y2="242.1" stroke="#222" stroke-width="0.7"/><line x1="436" y1="240.2" x2="438" y2="240.2" stroke="#222" stroke-width="0.7"/><line x1="434" y1="238.4" x2="438" y2="238.4" stroke="#222" stroke-width="0.7"/><line x1="436" y1="236.6" x2="438" y2="236.6" stroke="#222" stroke-width="0.7"/><line x1="436" y1="234.8" x2="438" y2="234.8" stroke="#222" stroke-width="0.7"/><line x1="436" y1="232.9" x2="438" y2="232.9" stroke="#222" stroke-width="0.7"/><line x1="434" y1="231.1" x2="438" y2="231.1" stroke="#222" stroke-width="0.7"/><line x1="436" y1="229.3" x2="438" y2="229.3" stroke="#222" stroke-width="0.7"/><line x1="436" y1="227.4" x2="438" y2="227.4" stroke="#222" stroke-width="0.7"/><line x1="436" y1="225.6" x2="438" y2="225.6" stroke="#222" stroke-width="0.7"/><line x1="434" y1="223.8" x2="438" y2="223.8" stroke="#222" stroke-width="0.7"/><line x1="436" y1="222.0" x2="438" y2="222.0" stroke="#222" stroke-width="0.7"/><line x1="436" y1="220.2" x2="438" y2="220.2" stroke="#222" stroke-width="0.7"/><line x1="436" y1="218.3" x2="438" y2="218.3" stroke="#222" stroke-width="0.7"/><line x1="434" y1="216.5" x2="438" y2="216.5" stroke="#222" stroke-width="0.7"/><line x1="436" y1="214.7" x2="438" y2="214.7" stroke="#222" stroke-width="0.7"/><line x1="436" y1="212.8" x2="438" y2="212.8" stroke="#222" stroke-width="0.7"/><line x1="436" y1="211.0" x2="438" y2="211.0" stroke="#222" stroke-width="0.7"/><line x1="434" y1="209.2" x2="438" y2="209.2" stroke="#222" stroke-width="0.7"/><line x1="436" y1="207.4" x2="438" y2="207.4" stroke="#222" stroke-width="0.7"/><line x1="436" y1="205.6" x2="438" y2="205.6" stroke="#222" stroke-width="0.7"/><line x1="436" y1="203.7" x2="438" y2="203.7" stroke="#222" stroke-width="0.7"/><line x1="434" y1="201.9" x2="438" y2="201.9" stroke="#222" stroke-width="0.7"/><line x1="436" y1="200.1" x2="438" y2="200.1" stroke="#222" stroke-width="0.7"/><line x1="436" y1="198.2" x2="438" y2="198.2" stroke="#222" stroke-width="0.7"/><line x1="436" y1="196.4" x2="438" y2="196.4" stroke="#222" stroke-width="0.7"/><line x1="434" y1="194.6" x2="438" y2="194.6" stroke="#222" stroke-width="0.7"/><line x1="436" y1="192.8" x2="438" y2="192.8" stroke="#222" stroke-width="0.7"/><line x1="436" y1="190.9" x2="438" y2="190.9" stroke="#222" stroke-width="0.7"/><line x1="436" y1="189.1" x2="438" y2="189.1" stroke="#222" stroke-width="0.7"/><line x1="434" y1="187.3" x2="438" y2="187.3" stroke="#222" stroke-width="0.7"/><line x1="436" y1="185.5" x2="438" y2="185.5" stroke="#222" stroke-width="0.7"/><line x1="436" y1="183.7" x2="438" y2="183.7" stroke="#222" stroke-width="0.7"/><line x1="436" y1="181.8" x2="438" y2="181.8" stroke="#222" stroke-width="0.7"/><line x1="434" y1="180.0" x2="438" y2="180.0" stroke="#222" stroke-width="0.7"/><line x1="533.3" y1="180" x2="533.3" y2="253" stroke="#333" stroke-width="1"/><line x1="438" y1="190.4" x2="646" y2="190.4" stroke="#8fd48f" stroke-width="1"/><path d="M438 203.2 L533 203.2 L534 204.5 L560 203.5 L580 202.6 L646 203.2" fill="none" stroke="#e08080" stroke-width="1"/></svg>
<div class="t " style="left:416px;top:176.2px;width:16.5px;text-align:right;font-size:8px;color:#222">40</div>
<div class="t " style="left:416px;top:190.8px;width:16.5px;text-align:right;font-size:8px;color:#222">32</div>
<div class="t " style="left:416px;top:205.4px;width:16.5px;text-align:right;font-size:8px;color:#222">24</div>
<div class="t " style="left:416px;top:220px;width:16.5px;text-align:right;font-size:8px;color:#222">16</div>
<div class="t " style="left:416px;top:234.6px;width:16.5px;text-align:right;font-size:8px;color:#222">8</div>
<div class="t " style="left:416px;top:249.2px;width:16.5px;text-align:right;font-size:8px;color:#222">0</div>
<div class="t " style="left:600px;top:183px;width:40px;text-align:right;font-size:6.2px;color:#333">m3/h*1000</div>
<div class="t " style="left:669.7px;top:165.3px;font-size:7.5px;color:#f4f4f4;letter-spacing:-0.2px">ODTAH</div>
<div class="a c" style="left:663px;top:176.4px;width:34.3px;height:10.6px;background:#f6f6f6;border:1px solid #999;font-size:9px;color:#111"><span style="display:inline-block;transform:scaleX(0.85);transform-origin:50% 50%">22.3 °C</span></div>
<div class="a c" style="left:664px;top:188px;width:33px;height:5.8px;background:#2a2c2a;color:#f4f4f4;font-size:7px;letter-spacing:-0.2px;">TT11</div>
<div class="t " style="left:668px;top:284.2px;font-size:7.5px;color:#f4f4f4;letter-spacing:-0.2px">PŘÍVOD</div>
<div class="a c" style="left:663px;top:293px;width:34.7px;height:9.8px;background:#f6f6f6;border:1px solid #999;font-size:9px;color:#111"><span style="display:inline-block;transform:scaleX(0.85);transform-origin:50% 50%">21.0 °C</span></div>
<div class="a c" style="left:664px;top:303.5px;width:33px;height:5.8px;background:#2a2c2a;color:#f4f4f4;font-size:7px;letter-spacing:-0.2px;">TT02</div>
<div class="a c" style="left:663px;top:310.5px;width:34.7px;height:10px;background:#f6f6f6;border:1px solid #999;font-size:9px;color:#111"><span style="display:inline-block;transform:scaleX(0.85);transform-origin:50% 50%">55.5 %</span></div>
<div class="a c" style="left:664px;top:321.5px;width:33px;height:5.8px;background:#2a2c2a;color:#f4f4f4;font-size:7px;letter-spacing:-0.2px;">TH02</div>
<div class="a " style="left:414px;top:290.5px;width:2px;height:87.5px;background:#111"></div>
<svg class="a" style="left:427.4px;top:301.2px;" width="34.2" height="73.5" viewBox="0 0 34.2 73.5"><rect x="0.5" y="0.5" width="33.2" height="72.5" fill="#fff" stroke="#333" stroke-width="1"/><line x1="1" y1="72.5" x2="33.5" y2="1" stroke="#222" stroke-width="0.9"/><line x1="4" y1="13.5" x2="10" y2="13.5" stroke="#111" stroke-width="1.4"/></svg>
<svg class="a" style="left:500.7px;top:301.2px;" width="34.4" height="73.5" viewBox="0 0 34.4 73.5"><rect x="0.5" y="0.5" width="33.4" height="72.5" fill="#fff" stroke="#333" stroke-width="1"/><line x1="1" y1="72.5" x2="33.5" y2="1" stroke="#222" stroke-width="0.9"/><line x1="3" y1="14" x2="11" y2="14" stroke="#111" stroke-width="0.9"/><line x1="7" y1="10" x2="7" y2="18" stroke="#111" stroke-width="0.9"/></svg>
<div class="a c ok" style="left:501px;top:293.5px;width:34px;height:7.8px;font-size:7px">CHOD</div>
<div class="a c ok" style="left:537.4px;top:293.5px;width:15px;height:7.8px;">OK</div>
<div class="a c" style="left:538.5px;top:284.8px;width:20.5px;height:6px;background:#2a2c2a;color:#f4f4f4;font-size:7px;letter-spacing:-0.2px;">TAL01</div>
<div class="a c" style="left:573px;top:284.8px;width:31px;height:6px;background:#2a2c2a;color:#f4f4f4;font-size:7px;letter-spacing:-0.2px;">MP01</div>
<div class="a c ok" style="left:570.3px;top:293.5px;width:34.1px;height:7.8px;font-size:7px">START</div>
<svg class="a" style="left:570.3px;top:301.5px;" width="34.1" height="73.2" viewBox="0 0 34.1 73.2"><rect x="0.5" y="0.5" width="33.1" height="72.2" fill="#fff" stroke="#333" stroke-width="1"/><line x1="3.9" y1="5.9" x2="3.9" y2="67.4" stroke="#111" stroke-width="1.1"/><path d="M12.7 5.2 L3.9 9.0 L12.7 12.8 M12.7 14.3 L3.9 18.1 L12.7 21.9 M12.7 23.3 L3.9 27.1 L12.7 30.9 M12.7 32.4 L3.9 36.2 L12.7 40.0 M12.7 41.5 L3.9 45.3 L12.7 49.1 M12.7 50.6 L3.9 54.4 L12.7 58.1 M12.7 59.6 L3.9 63.4 L12.7 67.2 " fill="none" stroke="#111" stroke-width="0.8"/></svg>
<div class="t " style="left:583.5px;top:306.8px;font-size:7.5px;font-weight:bold;color:#111;letter-spacing:-0.3px">100 %</div>
<svg class="a" style="left:0px;top:0px;pointer-events:none" width="1024" height="570" viewBox="0 0 1024 570"><path d="M611.4 304.3 Q613.9 302.0 616.6 302.2 A2.1 2.1 0 0 1 616.6 306.4 Q613.9 306.6 611.4 304.3Z" fill="#5c84d8"/><path d="M611.4 310.8 Q613.9 308.5 616.6 308.7 A2.1 2.1 0 0 1 616.6 312.9 Q613.9 313.1 611.4 310.8Z" fill="#5c84d8"/><path d="M611.4 317.4 Q613.9 315.1 616.6 315.3 A2.1 2.1 0 0 1 616.6 319.5 Q613.9 319.7 611.4 317.4Z" fill="#5c84d8"/><path d="M611.4 323.9 Q613.9 321.6 616.6 321.8 A2.1 2.1 0 0 1 616.6 326.0 Q613.9 326.2 611.4 323.9Z" fill="#5c84d8"/><path d="M611.4 330.4 Q613.9 328.1 616.6 328.3 A2.1 2.1 0 0 1 616.6 332.5 Q613.9 332.7 611.4 330.4Z" fill="#5c84d8"/><path d="M611.4 336.9 Q613.9 334.6 616.6 334.8 A2.1 2.1 0 0 1 616.6 339.1 Q613.9 339.2 611.4 336.9Z" fill="#5c84d8"/><path d="M611.4 343.5 Q613.9 341.2 616.6 341.4 A2.1 2.1 0 0 1 616.6 345.6 Q613.9 345.8 611.4 343.5Z" fill="#5c84d8"/><path d="M611.4 350.0 Q613.9 347.7 616.6 347.9 A2.1 2.1 0 0 1 616.6 352.1 Q613.9 352.3 611.4 350.0Z" fill="#5c84d8"/><path d="M611.4 356.5 Q613.9 354.2 616.6 354.4 A2.1 2.1 0 0 1 616.6 358.6 Q613.9 358.8 611.4 356.5Z" fill="#5c84d8"/><path d="M611.4 363.1 Q613.9 360.8 616.6 361.0 A2.1 2.1 0 0 1 616.6 365.2 Q613.9 365.4 611.4 363.1Z" fill="#5c84d8"/><path d="M611.4 369.6 Q613.9 367.3 616.6 367.5 A2.1 2.1 0 0 1 616.6 371.7 Q613.9 371.9 611.4 369.6Z" fill="#5c84d8"/></svg>
<div class="a c" style="left:637px;top:284.8px;width:25px;height:6px;background:#2a2c2a;color:#f4f4f4;font-size:7px;letter-spacing:-0.2px;">HAH01</div>
<div class="a c ok" style="left:637.3px;top:293.5px;width:14.7px;height:7.8px;">OK</div>
<div class="a " style="left:430.2px;top:378px;width:2.2px;height:84px;background:#f0f0f0"></div>
<div class="a " style="left:456.2px;top:378px;width:2.2px;height:84px;background:#f0f0f0"></div>
<div class="a " style="left:504px;top:378px;width:2.4px;height:141px;background:#ee1010"></div>
<div class="a " style="left:529.7px;top:378px;width:2.4px;height:141px;background:#ee1010"></div>
<div class="a " style="left:512px;top:432px;width:19px;height:2.4px;background:#ee1010"></div>
<div class="a c" style="left:513.8px;top:379.8px;width:34px;height:9.7px;background:#f2f2f2;border:1px solid #999;font-size:9px;color:#111"><span style="display:inline-block;transform:scaleX(0.85);transform-origin:50% 50%">21.3 °C</span></div>
<div class="a c" style="left:513.8px;top:390.5px;width:34px;height:6px;background:#2a2c2a;color:#f4f4f4;font-size:7px;letter-spacing:-0.2px;font-size:7.5px">TT51</div>
<svg class="a" style="left:495px;top:397px;" width="20" height="20" viewBox="0 0 20 20"><circle cx="10" cy="10" r="9.2" fill="#8c8c8c" stroke="#6a6a6a" stroke-width="0.8"/><path d="M10 2.6 L16.2 13.6 L3.8 13.6Z" fill="#e4e4e4"/><path d="M10 5 L10 16 M6.5 11 L10 7.5 L13.5 11 M5.5 13.6 L10 9.8 L14.5 13.6" fill="none" stroke="#9a9a9a" stroke-width="0.7"/><rect x="9" y="13.6" width="2" height="2.5" fill="#e4e4e4"/></svg>
<div class="t " style="left:475.3px;top:403.3px;font-size:8px;font-weight:bold;color:#f4f4f4;letter-spacing:-0.3px">OČ</div>
<div class="a c" style="left:472.8px;top:414.3px;width:23.2px;height:7.5px;background:#c8c8c8;border:1px solid #999;border-radius:1px;font-size:6.5px;color:#222">STOP</div>
<div class="a c" style="left:498.8px;top:416.2px;width:11.5px;height:5.8px;background:#2a2c2a;color:#f4f4f4;font-size:7px;letter-spacing:-0.2px;font-size:6.5px;font-weight:bold">M51</div>
<svg class="a" style="left:480px;top:422px;" width="36" height="24" viewBox="0 0 36 24"><defs><linearGradient id="vg" x1="0" y1="0" x2="0" y2="1"><stop offset="0" stop-color="#1a2aa0"/><stop offset="0.35" stop-color="#6a7ae8"/><stop offset="0.6" stop-color="#2a3ac0"/><stop offset="1" stop-color="#101880"/></linearGradient><linearGradient id="vg2" x1="0" y1="0" x2="0" y2="1"><stop offset="0" stop-color="#909098"/><stop offset="0.4" stop-color="#f0f0f4"/><stop offset="1" stop-color="#80808a"/></linearGradient></defs><rect x="3" y="4" width="18.5" height="13.5" rx="3" fill="url(#vg)"/><rect x="6" y="5.5" width="9" height="10.5" fill="url(#vg2)"/><rect x="16.5" y="7.5" width="5" height="1.6" fill="#111"/><rect x="16.5" y="11.5" width="5" height="1.6" fill="#111"/><rect x="16.5" y="9.3" width="5" height="1.6" fill="#e8e8ff"/><path d="M19.3 2.7 L29.9 2.7 L24.6 11.1Z M19.3 20.6 L29.9 20.6 L24.6 11.1Z" fill="#c4c4c4"/><path d="M25 11.1 L33.3 5.8 L33.3 16.2Z" fill="#bcbcbc"/><path d="M21 4 L24.6 11.1 L21 18" fill="none" stroke="#111" stroke-width="0.9"/></svg>
<div class="t " style="left:469.8px;top:431.3px;font-size:7.5px;font-weight:bold;color:#f0f0f0">0 %</div>
<div class="a c" style="left:485.5px;top:440.3px;width:10.5px;height:5.5px;background:#2a2c2a;color:#f4f4f4;font-size:7px;letter-spacing:-0.2px;font-weight:bold;font-size:6.5px">Y51</div>
<div class="a r" style="left:570.5px;top:399.7px;width:49px;height:7.3px;background:#c4c4c4;font-size:7.5px;color:#222;padding-right:2px"><span style="display:inline-block;transform:scaleX(0.85);transform-origin:100% 50%">166.8 hod</span></div>
<div class="a r" style="left:570.5px;top:408px;width:49px;height:7.5px;background:#c4c4c4;font-size:7.5px;color:#222;padding-right:2px"><span style="display:inline-block;transform:scaleX(0.85);transform-origin:100% 50%">0 zap</span></div>
<div class="t " style="left:390px;top:455.2px;font-size:7px;color:#f0f0f0">CH52.1a</div>
<svg class="a" style="left:0px;top:0px;pointer-events:none" width="1024" height="570" viewBox="0 0 1024 570"><rect x="389" y="462" width="74.5" height="56" fill="#fff" stroke="#888" stroke-width="1"/><rect x="407.5" y="466" width="52.5" height="47.6" fill="#b8b8b8"/><line x1="407.50" y1="466" x2="407.50" y2="513.6" stroke="#222" stroke-width="0.9"/><line x1="411.95" y1="466" x2="411.95" y2="513.6" stroke="#222" stroke-width="0.9"/><line x1="416.40" y1="466" x2="416.40" y2="513.6" stroke="#222" stroke-width="0.9"/><line x1="420.85" y1="466" x2="420.85" y2="513.6" stroke="#222" stroke-width="0.9"/><line x1="425.30" y1="466" x2="425.30" y2="513.6" stroke="#222" stroke-width="0.9"/><line x1="429.75" y1="466" x2="429.75" y2="513.6" stroke="#222" stroke-width="0.9"/><line x1="434.20" y1="466" x2="434.20" y2="513.6" stroke="#222" stroke-width="0.9"/><line x1="438.65" y1="466" x2="438.65" y2="513.6" stroke="#222" stroke-width="0.9"/><line x1="443.10" y1="466" x2="443.10" y2="513.6" stroke="#222" stroke-width="0.9"/><line x1="447.55" y1="466" x2="447.55" y2="513.6" stroke="#222" stroke-width="0.9"/><line x1="452.00" y1="466" x2="452.00" y2="513.6" stroke="#222" stroke-width="0.9"/><line x1="456.45" y1="466" x2="456.45" y2="513.6" stroke="#222" stroke-width="0.9"/><circle cx="433.3" cy="489.8" r="21" fill="none" stroke="#222" stroke-width="0.9"/></svg>
<div class="a c" style="left:390.3px;top:464.5px;width:23.3px;height:7px;background:#c8c8c8;border:1px solid #999;border-radius:1px;font-size:7px;color:#222">STOP</div>
<div class="a c" style="left:427.7px;top:504.8px;width:31.5px;height:10.2px;background:#f0f0f0;border:1px solid #aaa;font-size:8.5px;color:#333">0 %</div>
<div class="a " style="left:191px;top:497px;width:198px;height:2.2px;background:#f0f0f0"></div>
<div class="a " style="left:191px;top:512.3px;width:198px;height:2.2px;background:#f0f0f0"></div>
<div class="t " style="left:156.4px;top:483.6px;font-size:7px;color:#f0f0f0;letter-spacing:-0.2px">CH52.1e</div>
<svg class="a" style="left:154.9px;top:490px;" width="37" height="28" viewBox="0 0 37 28"><rect x="0.5" y="0.5" width="36" height="27" fill="#f4f4f4" stroke="#c4c4c4" stroke-width="1"/><rect x="9" y="9.5" width="25.5" height="5.5" fill="#c8c8c8"/><rect x="25" y="2" width="9.5" height="13" fill="#c8c8c8"/><line x1="9.8" y1="10" x2="9.8" y2="15" stroke="#111" stroke-width="0.7"/><line x1="11.6" y1="10" x2="11.6" y2="15" stroke="#111" stroke-width="0.7"/><line x1="13.4" y1="10" x2="13.4" y2="15" stroke="#111" stroke-width="0.7"/><line x1="15.2" y1="10" x2="15.2" y2="15" stroke="#111" stroke-width="0.7"/><line x1="17.0" y1="10" x2="17.0" y2="15" stroke="#111" stroke-width="0.7"/><line x1="18.8" y1="10" x2="18.8" y2="15" stroke="#111" stroke-width="0.7"/><line x1="20.6" y1="10" x2="20.6" y2="15" stroke="#111" stroke-width="0.7"/><line x1="22.4" y1="10" x2="22.4" y2="15" stroke="#111" stroke-width="0.7"/><line x1="24.2" y1="10" x2="24.2" y2="15" stroke="#111" stroke-width="0.7"/><line x1="26.0" y1="2" x2="26.0" y2="15" stroke="#111" stroke-width="0.9"/><line x1="28.3" y1="2" x2="28.3" y2="15" stroke="#111" stroke-width="0.9"/><line x1="30.6" y1="2" x2="30.6" y2="15" stroke="#111" stroke-width="0.9"/><line x1="32.9" y1="2" x2="32.9" y2="15" stroke="#111" stroke-width="0.9"/><line x1="26.5" y1="4" x2="32.5" y2="13" stroke="#111" stroke-width="0.7"/><rect x="1.5" y="15" width="34" height="10" fill="#e8e8e8"/><line x1="9" y1="25.3" x2="35" y2="25.3" stroke="#111" stroke-width="1"/></svg>
<div class="a c" style="left:156.1px;top:492.6px;width:23.8px;height:6.6px;background:#c8c8c8;border:1px solid #999;border-radius:1px;font-size:6.5px;color:#222">STOP</div>
<div class="t " style="left:154.9px;top:506.3px;width:37px;text-align:center;font-size:8px;color:#333">0 %</div>
<div class="t " style="left:214.9px;top:483.6px;font-size:7px;color:#f0f0f0;letter-spacing:-0.2px">CH52.1d</div>
<svg class="a" style="left:213.4px;top:490px;" width="37" height="28" viewBox="0 0 37 28"><rect x="0.5" y="0.5" width="36" height="27" fill="#f4f4f4" stroke="#c4c4c4" stroke-width="1"/><rect x="9" y="9.5" width="25.5" height="5.5" fill="#c8c8c8"/><rect x="25" y="2" width="9.5" height="13" fill="#c8c8c8"/><line x1="9.8" y1="10" x2="9.8" y2="15" stroke="#111" stroke-width="0.7"/><line x1="11.6" y1="10" x2="11.6" y2="15" stroke="#111" stroke-width="0.7"/><line x1="13.4" y1="10" x2="13.4" y2="15" stroke="#111" stroke-width="0.7"/><line x1="15.2" y1="10" x2="15.2" y2="15" stroke="#111" stroke-width="0.7"/><line x1="17.0" y1="10" x2="17.0" y2="15" stroke="#111" stroke-width="0.7"/><line x1="18.8" y1="10" x2="18.8" y2="15" stroke="#111" stroke-width="0.7"/><line x1="20.6" y1="10" x2="20.6" y2="15" stroke="#111" stroke-width="0.7"/><line x1="22.4" y1="10" x2="22.4" y2="15" stroke="#111" stroke-width="0.7"/><line x1="24.2" y1="10" x2="24.2" y2="15" stroke="#111" stroke-width="0.7"/><line x1="26.0" y1="2" x2="26.0" y2="15" stroke="#111" stroke-width="0.9"/><line x1="28.3" y1="2" x2="28.3" y2="15" stroke="#111" stroke-width="0.9"/><line x1="30.6" y1="2" x2="30.6" y2="15" stroke="#111" stroke-width="0.9"/><line x1="32.9" y1="2" x2="32.9" y2="15" stroke="#111" stroke-width="0.9"/><line x1="26.5" y1="4" x2="32.5" y2="13" stroke="#111" stroke-width="0.7"/><rect x="1.5" y="15" width="34" height="10" fill="#e8e8e8"/><line x1="9" y1="25.3" x2="35" y2="25.3" stroke="#111" stroke-width="1"/></svg>
<div class="a c" style="left:214.6px;top:492.6px;width:23.8px;height:6.6px;background:#c8c8c8;border:1px solid #999;border-radius:1px;font-size:6.5px;color:#222">STOP</div>
<div class="t " style="left:213.4px;top:506.3px;width:37px;text-align:center;font-size:8px;color:#333">0 %</div>
<div class="t " style="left:273.4px;top:483.6px;font-size:7px;color:#f0f0f0;letter-spacing:-0.2px">CH52.1c</div>
<svg class="a" style="left:271.9px;top:490px;" width="37" height="28" viewBox="0 0 37 28"><rect x="0.5" y="0.5" width="36" height="27" fill="#f4f4f4" stroke="#c4c4c4" stroke-width="1"/><rect x="9" y="9.5" width="25.5" height="5.5" fill="#c8c8c8"/><rect x="25" y="2" width="9.5" height="13" fill="#c8c8c8"/><line x1="9.8" y1="10" x2="9.8" y2="15" stroke="#111" stroke-width="0.7"/><line x1="11.6" y1="10" x2="11.6" y2="15" stroke="#111" stroke-width="0.7"/><line x1="13.4" y1="10" x2="13.4" y2="15" stroke="#111" stroke-width="0.7"/><line x1="15.2" y1="10" x2="15.2" y2="15" stroke="#111" stroke-width="0.7"/><line x1="17.0" y1="10" x2="17.0" y2="15" stroke="#111" stroke-width="0.7"/><line x1="18.8" y1="10" x2="18.8" y2="15" stroke="#111" stroke-width="0.7"/><line x1="20.6" y1="10" x2="20.6" y2="15" stroke="#111" stroke-width="0.7"/><line x1="22.4" y1="10" x2="22.4" y2="15" stroke="#111" stroke-width="0.7"/><line x1="24.2" y1="10" x2="24.2" y2="15" stroke="#111" stroke-width="0.7"/><line x1="26.0" y1="2" x2="26.0" y2="15" stroke="#111" stroke-width="0.9"/><line x1="28.3" y1="2" x2="28.3" y2="15" stroke="#111" stroke-width="0.9"/><line x1="30.6" y1="2" x2="30.6" y2="15" stroke="#111" stroke-width="0.9"/><line x1="32.9" y1="2" x2="32.9" y2="15" stroke="#111" stroke-width="0.9"/><line x1="26.5" y1="4" x2="32.5" y2="13" stroke="#111" stroke-width="0.7"/><rect x="1.5" y="15" width="34" height="10" fill="#e8e8e8"/><line x1="9" y1="25.3" x2="35" y2="25.3" stroke="#111" stroke-width="1"/></svg>
<div class="a c" style="left:273.1px;top:492.6px;width:23.8px;height:6.6px;background:#c8c8c8;border:1px solid #999;border-radius:1px;font-size:6.5px;color:#222">STOP</div>
<div class="t " style="left:271.9px;top:506.3px;width:37px;text-align:center;font-size:8px;color:#333">0 %</div>
<div class="t " style="left:332.1px;top:483.6px;font-size:7px;color:#f0f0f0;letter-spacing:-0.2px">CH52.1b</div>
<svg class="a" style="left:330.6px;top:490px;" width="37" height="28" viewBox="0 0 37 28"><rect x="0.5" y="0.5" width="36" height="27" fill="#f4f4f4" stroke="#c4c4c4" stroke-width="1"/><rect x="9" y="9.5" width="25.5" height="5.5" fill="#c8c8c8"/><rect x="25" y="2" width="9.5" height="13" fill="#c8c8c8"/><line x1="9.8" y1="10" x2="9.8" y2="15" stroke="#111" stroke-width="0.7"/><line x1="11.6" y1="10" x2="11.6" y2="15" stroke="#111" stroke-width="0.7"/><line x1="13.4" y1="10" x2="13.4" y2="15" stroke="#111" stroke-width="0.7"/><line x1="15.2" y1="10" x2="15.2" y2="15" stroke="#111" stroke-width="0.7"/><line x1="17.0" y1="10" x2="17.0" y2="15" stroke="#111" stroke-width="0.7"/><line x1="18.8" y1="10" x2="18.8" y2="15" stroke="#111" stroke-width="0.7"/><line x1="20.6" y1="10" x2="20.6" y2="15" stroke="#111" stroke-width="0.7"/><line x1="22.4" y1="10" x2="22.4" y2="15" stroke="#111" stroke-width="0.7"/><line x1="24.2" y1="10" x2="24.2" y2="15" stroke="#111" stroke-width="0.7"/><line x1="26.0" y1="2" x2="26.0" y2="15" stroke="#111" stroke-width="0.9"/><line x1="28.3" y1="2" x2="28.3" y2="15" stroke="#111" stroke-width="0.9"/><line x1="30.6" y1="2" x2="30.6" y2="15" stroke="#111" stroke-width="0.9"/><line x1="32.9" y1="2" x2="32.9" y2="15" stroke="#111" stroke-width="0.9"/><line x1="26.5" y1="4" x2="32.5" y2="13" stroke="#111" stroke-width="0.7"/><rect x="1.5" y="15" width="34" height="10" fill="#e8e8e8"/><line x1="9" y1="25.3" x2="35" y2="25.3" stroke="#111" stroke-width="1"/></svg>
<div class="a c" style="left:331.8px;top:492.6px;width:23.8px;height:6.6px;background:#c8c8c8;border:1px solid #999;border-radius:1px;font-size:6.5px;color:#222">STOP</div>
<div class="t " style="left:330.6px;top:506.3px;width:37px;text-align:center;font-size:8px;color:#333">0 %</div>
<div class="a pnl" style="left:722px;top:172px;width:267.5px;height:204.5px;"></div>
<div class="t ptit" style="left:725px;top:175.5px;">Prostor</div>
<div class="a " style="left:728.2px;top:187.2px;width:34.4px;height:16.8px;background:#1c1c1c;border:1px solid #8a8a8a"></div>
<div class="a c" style="left:729.2px;top:188.2px;width:32.4px;height:9.2px;background:#f2f2f2;font-size:8.6px;color:#111"><span style="display:inline-block;transform:scaleX(0.85);transform-origin:50% 50%">28.5 °C</span></div>
<div class="a c" style="left:728.2px;top:197.4px;width:34.4px;height:6.6px;font-size:7px;color:#fff;font-weight:bold"><span style="display:inline-block;transform:scaleX(0.85);transform-origin:50% 50%">TT07</span></div>
<div class="a " style="left:769.1px;top:187.2px;width:34.4px;height:16.8px;background:#1c1c1c;border:1px solid #8a8a8a"></div>
<div class="a c" style="left:770.1px;top:188.2px;width:32.4px;height:9.2px;background:#f2f2f2;font-size:8.6px;color:#111"><span style="display:inline-block;transform:scaleX(0.85);transform-origin:50% 50%">33.9 %</span></div>
<div class="a c" style="left:769.1px;top:197.4px;width:34.4px;height:6.6px;font-size:7px;color:#fff;font-weight:bold"><span style="display:inline-block;transform:scaleX(0.85);transform-origin:50% 50%">TH07</span></div>
<div class="a " style="left:728.2px;top:210.99px;width:34.4px;height:16.8px;background:#1c1c1c;border:1px solid #8a8a8a"></div>
<div class="a c" style="left:729.2px;top:211.99px;width:32.4px;height:9.2px;background:#f2f2f2;font-size:8.6px;color:#111"><span style="display:inline-block;transform:scaleX(0.85);transform-origin:50% 50%">24.9 °C</span></div>
<div class="a c" style="left:728.2px;top:221.19px;width:34.4px;height:6.6px;font-size:7px;color:#fff;font-weight:bold"><span style="display:inline-block;transform:scaleX(0.85);transform-origin:50% 50%">TT08</span></div>
<div class="a " style="left:769.1px;top:210.99px;width:34.4px;height:16.8px;background:#1c1c1c;border:1px solid #8a8a8a"></div>
<div class="a c" style="left:770.1px;top:211.99px;width:32.4px;height:9.2px;background:#f2f2f2;font-size:8.6px;color:#111"><span style="display:inline-block;transform:scaleX(0.85);transform-origin:50% 50%">37.1 %</span></div>
<div class="a c" style="left:769.1px;top:221.19px;width:34.4px;height:6.6px;font-size:7px;color:#fff;font-weight:bold"><span style="display:inline-block;transform:scaleX(0.85);transform-origin:50% 50%">TH08</span></div>
<div class="a " style="left:810.2px;top:210.99px;width:34.4px;height:16.8px;background:#1c1c1c;border:1px solid #8a8a8a"></div>
<div class="a c" style="left:811.2px;top:211.99px;width:32.4px;height:9.2px;background:#f2f2f2;font-size:8.6px;color:#111"><span style="display:inline-block;transform:scaleX(0.85);transform-origin:50% 50%">10.0 Pa</span></div>
<div class="a c" style="left:810.2px;top:221.19px;width:34.4px;height:6.6px;font-size:7px;color:#fff;font-weight:bold"><span style="display:inline-block;transform:scaleX(0.85);transform-origin:50% 50%">PD1</span></div>
<div class="a " style="left:728.2px;top:234.78px;width:34.4px;height:16.8px;background:#1c1c1c;border:1px solid #8a8a8a"></div>
<div class="a c" style="left:729.2px;top:235.78px;width:32.4px;height:9.2px;background:#f2f2f2;font-size:8.6px;color:#111"><span style="display:inline-block;transform:scaleX(0.85);transform-origin:50% 50%">22.7 °C</span></div>
<div class="a c" style="left:728.2px;top:244.98px;width:34.4px;height:6.6px;font-size:7px;color:#fff;font-weight:bold"><span style="display:inline-block;transform:scaleX(0.85);transform-origin:50% 50%">TT09</span></div>
<div class="a " style="left:769.1px;top:234.78px;width:34.4px;height:16.8px;background:#1c1c1c;border:1px solid #8a8a8a"></div>
<div class="a c" style="left:770.1px;top:235.78px;width:32.4px;height:9.2px;background:#f2f2f2;font-size:8.6px;color:#111"><span style="display:inline-block;transform:scaleX(0.85);transform-origin:50% 50%">46.3 %</span></div>
<div class="a c" style="left:769.1px;top:244.98px;width:34.4px;height:6.6px;font-size:7px;color:#fff;font-weight:bold"><span style="display:inline-block;transform:scaleX(0.85);transform-origin:50% 50%">TH09</span></div>
<div class="a " style="left:728.2px;top:258.57px;width:34.4px;height:16.8px;background:#1c1c1c;border:1px solid #8a8a8a"></div>
<div class="a c" style="left:729.2px;top:259.57px;width:32.4px;height:9.2px;background:#f2f2f2;font-size:8.6px;color:#111"><span style="display:inline-block;transform:scaleX(0.85);transform-origin:50% 50%">23.5 °C</span></div>
<div class="a c" style="left:728.2px;top:268.77px;width:34.4px;height:6.6px;font-size:7px;color:#fff;font-weight:bold"><span style="display:inline-block;transform:scaleX(0.85);transform-origin:50% 50%">TT10</span></div>
<div class="a " style="left:769.1px;top:258.57px;width:34.4px;height:16.8px;background:#1c1c1c;border:1px solid #8a8a8a"></div>
<div class="a c" style="left:770.1px;top:259.57px;width:32.4px;height:9.2px;background:#f2f2f2;font-size:8.6px;color:#111"><span style="display:inline-block;transform:scaleX(0.85);transform-origin:50% 50%">44.1 %</span></div>
<div class="a c" style="left:769.1px;top:268.77px;width:34.4px;height:6.6px;font-size:7px;color:#fff;font-weight:bold"><span style="display:inline-block;transform:scaleX(0.85);transform-origin:50% 50%">TH10</span></div>
<div class="a " style="left:810.2px;top:258.57px;width:34.4px;height:16.8px;background:#1c1c1c;border:1px solid #8a8a8a"></div>
<div class="a c" style="left:811.2px;top:259.57px;width:32.4px;height:9.2px;background:#f2f2f2;font-size:8.6px;color:#111"><span style="display:inline-block;transform:scaleX(0.85);transform-origin:50% 50%">9.8 Pa</span></div>
<div class="a c" style="left:810.2px;top:268.77px;width:34.4px;height:6.6px;font-size:7px;color:#fff;font-weight:bold"><span style="display:inline-block;transform:scaleX(0.85);transform-origin:50% 50%">PD2</span></div>
<div class="a " style="left:728.2px;top:282.36px;width:34.4px;height:16.8px;background:#1c1c1c;border:1px solid #8a8a8a"></div>
<div class="a c" style="left:729.2px;top:283.36px;width:32.4px;height:9.2px;background:#f2f2f2;font-size:8.6px;color:#111"><span style="display:inline-block;transform:scaleX(0.85);transform-origin:50% 50%">23.0 °C</span></div>
<div class="a c" style="left:728.2px;top:292.56px;width:34.4px;height:6.6px;font-size:7px;color:#fff;font-weight:bold"><span style="display:inline-block;transform:scaleX(0.85);transform-origin:50% 50%">TT11</span></div>
<div class="a " style="left:769.1px;top:282.36px;width:34.4px;height:16.8px;background:#1c1c1c;border:1px solid #8a8a8a"></div>
<div class="a c" style="left:770.1px;top:283.36px;width:32.4px;height:9.2px;background:#f2f2f2;font-size:8.6px;color:#111"><span style="display:inline-block;transform:scaleX(0.85);transform-origin:50% 50%">42.2 %</span></div>
<div class="a c" style="left:769.1px;top:292.56px;width:34.4px;height:6.6px;font-size:7px;color:#fff;font-weight:bold"><span style="display:inline-block;transform:scaleX(0.85);transform-origin:50% 50%">TH11</span></div>
<div class="a " style="left:810.2px;top:282.36px;width:34.4px;height:16.8px;background:#1c1c1c;border:1px solid #8a8a8a"></div>
<div class="a c" style="left:811.2px;top:283.36px;width:32.4px;height:9.2px;background:#f2f2f2;font-size:8.6px;color:#111"><span style="display:inline-block;transform:scaleX(0.85);transform-origin:50% 50%">10.1 Pa</span></div>
<div class="a c" style="left:810.2px;top:292.56px;width:34.4px;height:6.6px;font-size:7px;color:#fff;font-weight:bold"><span style="display:inline-block;transform:scaleX(0.85);transform-origin:50% 50%">PD3</span></div>
<div class="a " style="left:728.2px;top:306.15px;width:34.4px;height:16.8px;background:#1c1c1c;border:1px solid #8a8a8a"></div>
<div class="a c" style="left:729.2px;top:307.15px;width:32.4px;height:9.2px;background:#f2f2f2;font-size:8.6px;color:#111"><span style="display:inline-block;transform:scaleX(0.85);transform-origin:50% 50%">21.8 °C</span></div>
<div class="a c" style="left:728.2px;top:316.35px;width:34.4px;height:6.6px;font-size:7px;color:#fff;font-weight:bold"><span style="display:inline-block;transform:scaleX(0.85);transform-origin:50% 50%">TT12</span></div>
<div class="a " style="left:769.1px;top:306.15px;width:34.4px;height:16.8px;background:#1c1c1c;border:1px solid #8a8a8a"></div>
<div class="a c" style="left:770.1px;top:307.15px;width:32.4px;height:9.2px;background:#f2f2f2;font-size:8.6px;color:#111"><span style="display:inline-block;transform:scaleX(0.85);transform-origin:50% 50%">42.5 %</span></div>
<div class="a c" style="left:769.1px;top:316.35px;width:34.4px;height:6.6px;font-size:7px;color:#fff;font-weight:bold"><span style="display:inline-block;transform:scaleX(0.85);transform-origin:50% 50%">TH12</span></div>
<div class="a " style="left:728.2px;top:329.94px;width:34.4px;height:16.8px;background:#1c1c1c;border:1px solid #8a8a8a"></div>
<div class="a c" style="left:729.2px;top:330.94px;width:32.4px;height:9.2px;background:#f2f2f2;font-size:8.6px;color:#111"><span style="display:inline-block;transform:scaleX(0.85);transform-origin:50% 50%">21.7 °C</span></div>
<div class="a c" style="left:728.2px;top:340.14px;width:34.4px;height:6.6px;font-size:7px;color:#fff;font-weight:bold"><span style="display:inline-block;transform:scaleX(0.85);transform-origin:50% 50%">TT13</span></div>
<div class="a " style="left:769.1px;top:329.94px;width:34.4px;height:16.8px;background:#1c1c1c;border:1px solid #8a8a8a"></div>
<div class="a c" style="left:770.1px;top:330.94px;width:32.4px;height:9.2px;background:#f2f2f2;font-size:8.6px;color:#111"><span style="display:inline-block;transform:scaleX(0.85);transform-origin:50% 50%">44.0 %</span></div>
<div class="a c" style="left:769.1px;top:340.14px;width:34.4px;height:6.6px;font-size:7px;color:#fff;font-weight:bold"><span style="display:inline-block;transform:scaleX(0.85);transform-origin:50% 50%">TH13</span></div>
<div class="a " style="left:810.2px;top:329.94px;width:34.4px;height:16.8px;background:#1c1c1c;border:1px solid #8a8a8a"></div>
<div class="a c" style="left:811.2px;top:330.94px;width:32.4px;height:9.2px;background:#f2f2f2;font-size:8.6px;color:#111"><span style="display:inline-block;transform:scaleX(0.85);transform-origin:50% 50%">10.1 Pa</span></div>
<div class="a c" style="left:810.2px;top:340.14px;width:34.4px;height:6.6px;font-size:7px;color:#fff;font-weight:bold"><span style="display:inline-block;transform:scaleX(0.85);transform-origin:50% 50%">PD4</span></div>
<div class="a " style="left:728.2px;top:353.73px;width:34.4px;height:16.8px;background:#1c1c1c;border:1px solid #8a8a8a"></div>
<div class="a c" style="left:729.2px;top:354.73px;width:32.4px;height:9.2px;background:#f2f2f2;font-size:8.6px;color:#111"><span style="display:inline-block;transform:scaleX(0.85);transform-origin:50% 50%">21.1 °C</span></div>
<div class="a c" style="left:728.2px;top:363.93px;width:34.4px;height:6.6px;font-size:7px;color:#fff;font-weight:bold"><span style="display:inline-block;transform:scaleX(0.85);transform-origin:50% 50%">TT14</span></div>
<div class="a " style="left:769.1px;top:353.73px;width:34.4px;height:16.8px;background:#1c1c1c;border:1px solid #8a8a8a"></div>
<div class="a c" style="left:770.1px;top:354.73px;width:32.4px;height:9.2px;background:#f2f2f2;font-size:8.6px;color:#111"><span style="display:inline-block;transform:scaleX(0.85);transform-origin:50% 50%">46.2 %</span></div>
<div class="a c" style="left:769.1px;top:363.93px;width:34.4px;height:6.6px;font-size:7px;color:#fff;font-weight:bold"><span style="display:inline-block;transform:scaleX(0.85);transform-origin:50% 50%">TH14</span></div>
<div class="a " style="left:810.2px;top:353.73px;width:34.4px;height:16.8px;background:#1c1c1c;border:1px solid #8a8a8a"></div>
<div class="a c" style="left:811.2px;top:354.73px;width:32.4px;height:9.2px;background:#f2f2f2;font-size:8.6px;color:#111"><span style="display:inline-block;transform:scaleX(0.85);transform-origin:50% 50%">10.2 Pa</span></div>
<div class="a c" style="left:810.2px;top:363.93px;width:34.4px;height:6.6px;font-size:7px;color:#fff;font-weight:bold"><span style="display:inline-block;transform:scaleX(0.85);transform-origin:50% 50%">PD5</span></div>
<div class="t " style="left:859px;top:192.6px;font-size:7.8px;color:#222;letter-spacing:-0.1px">⌀ teplota</div>
<div class="a r" style="left:916.6px;top:189.6px;width:66.6px;height:14px;background:#f0f0f0;border:1px solid #999;border-radius:2px;font-size:12px;color:#111;padding-right:3px"><span style="display:inline-block;transform:scaleX(0.87);transform-origin:100% 50%">23.4 °C</span></div>
<div class="t " style="left:859px;top:215.9px;font-size:7.8px;color:#222;letter-spacing:-0.1px">⌀ rel. vlhkost</div>
<div class="a r" style="left:916.6px;top:212.9px;width:66.6px;height:14px;background:#f0f0f0;border:1px solid #999;border-radius:2px;font-size:12px;color:#111;padding-right:3px"><span style="display:inline-block;transform:scaleX(0.87);transform-origin:100% 50%">42.1 %</span></div>
<div class="t " style="left:859px;top:239.2px;font-size:7.8px;color:#222;letter-spacing:-0.1px">⌀ abs. vlhkost</div>
<div class="a r" style="left:916.6px;top:236.2px;width:66.6px;height:14px;background:#f0f0f0;border:1px solid #999;border-radius:2px;font-size:12px;color:#111;padding-right:3px"><span style="display:inline-block;transform:scaleX(0.87);transform-origin:100% 50%">8.9 g/m3</span></div>
<div class="t " style="left:859px;top:262.5px;font-size:7.8px;color:#222;letter-spacing:-0.1px">⌀ spec. vlhkost</div>
<div class="a r" style="left:916.6px;top:259.5px;width:66.6px;height:14px;background:#f0f0f0;border:1px solid #999;border-radius:2px;font-size:12px;color:#111;padding-right:3px"><span style="display:inline-block;transform:scaleX(0.87);transform-origin:100% 50%">7.4 g/kg s.v.</span></div>
<div class="t " style="left:859px;top:285.8px;font-size:7.8px;color:#222;letter-spacing:-0.1px">⌀ rosný bod</div>
<div class="a r" style="left:916.6px;top:282.8px;width:66.6px;height:14px;background:#f0f0f0;border:1px solid #999;border-radius:2px;font-size:12px;color:#111;padding-right:3px"><span style="display:inline-block;transform:scaleX(0.87);transform-origin:100% 50%">9.8 °C</span></div>
<div class="t " style="left:859px;top:309.1px;font-size:7.8px;color:#222;letter-spacing:-0.1px">⌀ rel. tlak</div>
<div class="a r" style="left:916.6px;top:306.1px;width:66.6px;height:14px;background:#f0f0f0;border:1px solid #999;border-radius:2px;font-size:12px;color:#111;padding-right:3px"><span style="display:inline-block;transform:scaleX(0.87);transform-origin:100% 50%">10.0 Pa</span></div>
<div class="a pnl" style="left:722px;top:380.3px;width:267.5px;height:73.5px;"></div>
<div class="t ptit" style="left:725px;top:382.5px;">Teplota</div>
<div class="t ptit" style="left:807px;top:382.5px;">Vlhkost</div>
<div class="t ptit" style="left:890px;top:382.5px;">Tlak</div>
<div class="t " style="left:725px;top:392.5px;font-size:7px;color:#222">Set</div>
<div class="t " style="left:742px;top:392.5px;font-size:7px;color:#222">Msr</div>
<div class="t " style="left:760px;top:392.5px;font-size:7px;color:#222">Set</div>
<div class="t " style="left:807.5px;top:392.5px;font-size:7px;color:#222">Set</div>
<div class="t " style="left:825px;top:392.5px;font-size:7px;color:#222">Msr</div>
<div class="t " style="left:889.5px;top:392.5px;font-size:7px;color:#222">Set</div>
<div class="t " style="left:907px;top:392.5px;font-size:7px;color:#222">Msr</div>
<div class="a " style="left:723.7px;top:398.5px;width:17px;height:54px;background:#4a4a4a"></div>
<div class="a " style="left:724.5px;top:399.3px;width:15.4px;height:34.7px;background:#c4c4c4"></div>
<div class="a " style="left:724.5px;top:434px;width:15.4px;height:18.5px;background:#404040"></div>
<div class="t " style="left:723.7px;top:445.5px;width:17px;text-align:center;font-size:7px;color:#fff;letter-spacing:-0.3px">20°C</div>
<div class="a " style="left:740.8px;top:398.5px;width:17.2px;height:54px;background:#4a4a4a"></div>
<div class="a " style="left:741.6px;top:399.3px;width:15.6px;height:28.3px;background:#c4c4c4"></div>
<div class="a " style="left:741.6px;top:427.6px;width:15.6px;height:24.9px;background:#ff6a00"></div>
<div class="t " style="left:740.8px;top:445.5px;width:17.2px;text-align:center;font-size:7px;color:#ffe0c0;letter-spacing:-0.3px">23°C</div>
<div class="a " style="left:758.5px;top:398.5px;width:17px;height:54px;background:#4a4a4a"></div>
<div class="a " style="left:759.3px;top:399.3px;width:15.4px;height:31.5px;background:#c4c4c4"></div>
<div class="a " style="left:759.3px;top:430.8px;width:15.4px;height:21.7px;background:#404040"></div>
<div class="t " style="left:758.5px;top:445.5px;width:17px;text-align:center;font-size:7px;color:#fff;letter-spacing:-0.3px">22°C</div>
<div class="a " style="left:806.2px;top:398.5px;width:17px;height:54px;background:#4a4a4a"></div>
<div class="a " style="left:807px;top:399.3px;width:15.4px;height:26.7px;background:#c4c4c4"></div>
<div class="a " style="left:807px;top:426px;width:15.4px;height:26.5px;background:#404040"></div>
<div class="t " style="left:806.2px;top:445.5px;width:17px;text-align:center;font-size:7px;color:#fff;letter-spacing:-0.3px">44%</div>
<div class="a " style="left:823.5px;top:398.5px;width:17.2px;height:54px;background:#4a4a4a"></div>
<div class="a " style="left:824.3px;top:399.3px;width:15.6px;height:27.8px;background:#c4c4c4"></div>
<div class="a " style="left:824.3px;top:427.1px;width:15.6px;height:25.4px;background:#1010f0"></div>
<div class="t " style="left:823.5px;top:445.5px;width:17.2px;text-align:center;font-size:7px;color:#fff;letter-spacing:-0.3px">42%</div>
<div class="a " style="left:824.3px;top:426.5px;width:15.6px;height:1px;background:#9ab0ff"></div>
<div class="a " style="left:888px;top:398.5px;width:17.5px;height:54px;background:#4a4a4a"></div>
<div class="a " style="left:888.8px;top:399.3px;width:15.9px;height:12.7px;background:#c4c4c4"></div>
<div class="a " style="left:888.8px;top:412px;width:15.9px;height:40.5px;background:#404040"></div>
<div class="t " style="left:888px;top:445.5px;width:17.5px;text-align:center;font-size:7px;color:#fff;letter-spacing:-0.3px">10Pa</div>
<div class="a " style="left:905.5px;top:398.5px;width:17.2px;height:54px;background:#4a4a4a"></div>
<div class="a " style="left:906.3px;top:399.3px;width:15.6px;height:12.7px;background:#c4c4c4"></div>
<div class="a " style="left:906.3px;top:412px;width:15.6px;height:40.5px;background:#d010d0"></div>
<div class="t " style="left:905.5px;top:445.5px;width:17.2px;text-align:center;font-size:7px;color:#ffd0ff;letter-spacing:-0.3px">10Pa</div>
<div class="t " style="left:726px;top:418px;font-size:8px;color:#eee;transform:rotate(-90deg);transform-origin:0 0;top:436px">Topení</div>
<div class="t " style="left:760px;top:418px;font-size:8px;color:#eee;transform:rotate(-90deg);transform-origin:0 0;top:439px">Chlazení</div>
<div class="a " style="left:7px;top:519.5px;width:1017px;height:48.5px;background:#5c5c5c"></div>
<div class="a " style="left:0px;top:568px;width:1024px;height:2px;background:#111"></div>
<div class="a " style="left:12px;top:524.7px;width:447px;height:37.3px;background:#fff"></div>
<div class="a " style="left:12px;top:524.7px;width:435px;height:9.5px;background:#f0f0f0;border-bottom:1px solid #ddd"></div>
<div class="a " style="left:447px;top:524.7px;width:12px;height:37.3px;background:#e4e4e4"></div>
<div class="a " style="left:454px;top:544px;width:1px;height:9px;background:#555"></div>
<div class="a " style="left:12px;top:552.3px;width:435px;height:9.7px;background:#d4d4d4;border-top:1px solid #999"></div>
<div class="a " style="left:75.5px;top:524.7px;width:1px;height:9.5px;background:#dcdcdc"></div>
<div class="a " style="left:141.5px;top:524.7px;width:1px;height:9.5px;background:#dcdcdc"></div>
<div class="a " style="left:205.5px;top:524.7px;width:1px;height:9.5px;background:#dcdcdc"></div>
<div class="a " style="left:276.5px;top:524.7px;width:1px;height:9.5px;background:#dcdcdc"></div>
<div class="a " style="left:346.5px;top:524.7px;width:1px;height:9.5px;background:#dcdcdc"></div>
<div class="a " style="left:417.5px;top:524.7px;width:1px;height:9.5px;background:#dcdcdc"></div>
<div class="t " style="left:14px;top:526.4px;font-size:7.4px;color:#333;-webkit-text-stroke:0"><span style="display:inline-block;transform:scaleX(0.84);transform-origin:0 50%">Zdroj</span></div>
<div class="t " style="left:78px;top:526.4px;font-size:7.4px;color:#333;-webkit-text-stroke:0"><span style="display:inline-block;transform:scaleX(0.84);transform-origin:0 50%">Popis</span></div>
<div class="t " style="left:144px;top:526.4px;font-size:7.4px;color:#333;-webkit-text-stroke:0"><span style="display:inline-block;transform:scaleX(0.84);transform-origin:0 50%">Komentář</span></div>
<div class="t " style="left:208px;top:526.4px;font-size:7.4px;color:#333;-webkit-text-stroke:0"><span style="display:inline-block;transform:scaleX(0.84);transform-origin:0 50%"><span style="font-size:5px;vertical-align:1px">▲</span>Čas vzniku</span></div>
<div class="t " style="left:279px;top:526.4px;font-size:7.4px;color:#333;-webkit-text-stroke:0"><span style="display:inline-block;transform:scaleX(0.84);transform-origin:0 50%">Čas zániku</span></div>
<div class="t " style="left:349px;top:526.4px;font-size:7.4px;color:#333;-webkit-text-stroke:0"><span style="display:inline-block;transform:scaleX(0.84);transform-origin:0 50%">Čas kvitace</span></div>
<div class="t " style="left:420px;top:526.4px;font-size:7.4px;color:#333;-webkit-text-stroke:0"><span style="display:inline-block;transform:scaleX(0.84);transform-origin:0 50%">Priorita</span></div>
<div class="t " style="left:14px;top:535.2px;font-size:7.4px;color:#2828c8;-webkit-text-stroke:0"><span style="display:inline-block;transform:scaleX(0.84);transform-origin:0 50%">T_AKU_TT121</span></div>
<div class="t " style="left:78px;top:535.2px;font-size:7.4px;color:#2828c8;-webkit-text-stroke:0"><span style="display:inline-block;transform:scaleX(0.84);transform-origin:0 50%">Horní mez (>17)</span></div>
<div class="t " style="left:144px;top:535.2px;font-size:7.4px;color:#2828c8;-webkit-text-stroke:0"><span style="display:inline-block;transform:scaleX(0.84);transform-origin:0 50%">max 17.2633</span></div>
<div class="t " style="left:208px;top:535.2px;font-size:7.4px;color:#2828c8;-webkit-text-stroke:0"><span style="display:inline-block;transform:scaleX(0.84);transform-origin:0 50%">25.08.2025 04:17:36</span></div>
<div class="t " style="left:279px;top:535.2px;font-size:7.4px;color:#2828c8;-webkit-text-stroke:0"><span style="display:inline-block;transform:scaleX(0.84);transform-origin:0 50%">25.08.2025 04:20:55</span></div>
<div class="t " style="left:420px;top:535.2px;font-size:7.4px;color:#2828c8;-webkit-text-stroke:0"><span style="display:inline-block;transform:scaleX(0.84);transform-origin:0 50%">0</span></div>
<div class="t " style="left:14px;top:544.2px;font-size:7.4px;color:#e02828;-webkit-text-stroke:0"><span style="display:inline-block;transform:scaleX(0.84);transform-origin:0 50%">CH01_FL2_porucha</span></div>
<div class="t " style="left:78px;top:544.2px;font-size:7.4px;color:#e02828;-webkit-text-stroke:0"><span style="display:inline-block;transform:scaleX(0.84);transform-origin:0 50%">Nedostatečný průtok...</span></div>
<div class="t " style="left:208px;top:544.2px;font-size:7.4px;color:#e02828;-webkit-text-stroke:0"><span style="display:inline-block;transform:scaleX(0.84);transform-origin:0 50%">25.08.2025 05:27:22</span></div>
<div class="t " style="left:420px;top:544.2px;font-size:7.4px;color:#e02828;-webkit-text-stroke:0"><span style="display:inline-block;transform:scaleX(0.84);transform-origin:0 50%">0</span></div>
<div class="t " style="left:14px;top:553.2px;font-size:7.4px;color:#2828c8;-webkit-text-stroke:0"><span style="display:inline-block;transform:scaleX(0.84);transform-origin:0 50%">PowerFactorTotal</span></div>
<div class="t " style="left:78px;top:553.2px;font-size:7.4px;color:#2828c8;-webkit-text-stroke:0"><span style="display:inline-block;transform:scaleX(0.84);transform-origin:0 50%">Horní mez (>1)</span></div>
<div class="t " style="left:144px;top:553.2px;font-size:7.4px;color:#2828c8;-webkit-text-stroke:0"><span style="display:inline-block;transform:scaleX(0.84);transform-origin:0 50%">0.996229</span></div>
<div class="t " style="left:208px;top:553.2px;font-size:7.4px;color:#2828c8;-webkit-text-stroke:0"><span style="display:inline-block;transform:scaleX(0.84);transform-origin:0 50%">25.08.2025 08:03:12</span></div>
<div class="t " style="left:279px;top:553.2px;font-size:7.4px;color:#2828c8;-webkit-text-stroke:0"><span style="display:inline-block;transform:scaleX(0.84);transform-origin:0 50%">25.08.2025 08:03:42</span></div>
<div class="t " style="left:420px;top:553.2px;font-size:7.4px;color:#2828c8;-webkit-text-stroke:0"><span style="display:inline-block;transform:scaleX(0.84);transform-origin:0 50%">0</span></div>
<div class="a " style="left:462px;top:524.6px;width:246.3px;height:37.4px;background:#fff;border:1px solid #999"></div>
<div class="a " style="left:463px;top:525.3px;width:233px;height:9.2px;background:#f0f0f0;border-bottom:1px solid #ddd"></div>
<div class="a " style="left:537.5px;top:525.3px;width:1px;height:36px;background:#e4e4e4"></div>
<div class="a " style="left:623.1px;top:525.3px;width:1px;height:36px;background:#e4e4e4"></div>
<div class="t " style="left:464px;top:526.4px;font-size:7.2px;color:#333;-webkit-text-stroke:0"><span style="display:inline-block;transform:scaleX(0.82);transform-origin:0 50%">Popis</span></div>
<div class="t " style="left:540px;top:526.4px;font-size:7.2px;color:#333;-webkit-text-stroke:0"><span style="display:inline-block;transform:scaleX(0.82);transform-origin:0 50%">Zdroj</span></div>
<div class="t " style="left:625.6px;top:526.4px;font-size:7.2px;color:#333;-webkit-text-stroke:0"><span style="display:inline-block;transform:scaleX(0.82);transform-origin:0 50%"><span style="font-size:5px;vertical-align:1px">▲</span>Čas vzniku</span></div>
<div class="a " style="left:463px;top:543.1px;width:233px;height:1px;background:#eee"></div>
<div class="t " style="left:464px;top:535.2px;font-size:7.2px;color:#222;-webkit-text-stroke:0"><span style="display:inline-block;transform:scaleX(0.82);transform-origin:0 50%">Value = 0</span></div>
<div class="t " style="left:540px;top:535.2px;font-size:7.2px;color:#222;-webkit-text-stroke:0"><span style="display:inline-block;transform:scaleX(0.82);transform-origin:0 50%">OC_CHOD</span></div>
<div class="t " style="left:626px;top:535.2px;font-size:7.2px;color:#222;-webkit-text-stroke:0"><span style="display:inline-block;transform:scaleX(0.82);transform-origin:0 50%">25.08.2025 08:01:51</span></div>
<div class="a " style="left:463px;top:552px;width:233px;height:1px;background:#eee"></div>
<div class="t " style="left:464px;top:544.1px;font-size:7.2px;color:#222;-webkit-text-stroke:0"><span style="display:inline-block;transform:scaleX(0.82);transform-origin:0 50%">Value = 1</span></div>
<div class="t " style="left:540px;top:544.1px;font-size:7.2px;color:#222;-webkit-text-stroke:0"><span style="display:inline-block;transform:scaleX(0.82);transform-origin:0 50%">HUM_CHOD</span></div>
<div class="t " style="left:626px;top:544.1px;font-size:7.2px;color:#222;-webkit-text-stroke:0"><span style="display:inline-block;transform:scaleX(0.82);transform-origin:0 50%">25.08.2025 08:01:51</span></div>
<div class="a " style="left:463px;top:560.9px;width:233px;height:1px;background:#eee"></div>
<div class="t " style="left:464px;top:553px;font-size:7.2px;color:#222;-webkit-text-stroke:0"><span style="display:inline-block;transform:scaleX(0.82);transform-origin:0 50%">Value = 0</span></div>
<div class="t " style="left:540px;top:553px;font-size:7.2px;color:#222;-webkit-text-stroke:0"><span style="display:inline-block;transform:scaleX(0.82);transform-origin:0 50%">TCa_CHOD</span></div>
<div class="t " style="left:626px;top:553px;font-size:7.2px;color:#222;-webkit-text-stroke:0"><span style="display:inline-block;transform:scaleX(0.82);transform-origin:0 50%">25.08.2025 08:01:51</span></div>
<div class="a " style="left:710.5px;top:523.6px;width:276.5px;height:38.4px;background:#fff;border-left:1px solid #888"></div>
<svg class="a" style="left:0px;top:0px;pointer-events:none" width="1024" height="570" viewBox="0 0 1024 570"><path d="M742 530 L719 530 Q716.3 530 716.3 532.7 L716.3 539.8 Q716.3 542.4 719 542.4 L737 542.4 Q739.7 542.4 739.7 545 L739.7 552 Q739.7 554.7 737 554.7 L714 554.7" fill="none" stroke="#1b3d6a" stroke-width="5.0" stroke-linejoin="miter" stroke-linecap="butt"/><path d="M748.6 535 L748.6 551.8 Q748.6 554.7 751.5 554.7 L770 554.7 L770 535" fill="none" stroke="#1b3d6a" stroke-width="5.0" stroke-linejoin="miter" stroke-linecap="butt"/><path d="M779.3 557 L779.3 540 Q779.3 537.3 782 537.3 L800 537.3 L800 557" fill="none" stroke="#b4cc1a" stroke-width="5.0" stroke-linejoin="miter" stroke-linecap="butt"/><path d="M807.3 557 L807.3 540 Q807.3 537.3 810 537.3 L828.2 537.3 L828.2 557" fill="none" stroke="#b4cc1a" stroke-width="5.0" stroke-linejoin="miter" stroke-linecap="butt"/><path d="M834 535.5 L847 547 L860 535.5 M847 546 L847 557" fill="none" stroke="#1b3d6a" stroke-width="5.0" stroke-linejoin="miter" stroke-linecap="butt"/><path d="M866.3 557 L866.3 530 L881.6 547 L897 530 L897 557" fill="none" stroke="#1b3d6a" stroke-width="5.0" stroke-linejoin="miter" stroke-linecap="butt"/><path d="M908.5 537.3 L924.5 537.3 Q927.2 537.3 927.2 540 L927.2 552 Q927.2 554.7 924.5 554.7 L908.5 554.7 Q905.8 554.7 905.8 552 L905.8 540 Q905.8 537.3 908.5 537.3Z" fill="none" stroke="#1b3d6a" stroke-width="5.0" stroke-linejoin="miter" stroke-linecap="butt"/><path d="M936.7 557 L936.7 540 Q936.7 537.3 939.4 537.3 L956.7 537.3 L956.7 557" fill="none" stroke="#1b3d6a" stroke-width="5.0" stroke-linejoin="miter" stroke-linecap="butt"/><path d="M962.3 537.3 L982.8 537.3 M972.5 537.3 L972.5 557" fill="none" stroke="#1b3d6a" stroke-width="5.0" stroke-linejoin="miter" stroke-linecap="butt"/></svg>
<svg class="a" style="left:0px;top:0px;pointer-events:none" width="1024" height="570" viewBox="0 0 1024 570"><circle cx="1002" cy="38" r="32.3" fill="none" stroke="rgba(60,85,110,0.5)" stroke-width="3.6"/><rect x="981" y="21" width="20" height="11.5" fill="none" stroke="rgba(230,120,60,0.75)" stroke-width="1.5"/><rect x="981" y="32.5" width="20" height="3.5" fill="rgba(200,90,30,0.75)"/><rect x="1003.5" y="41" width="20" height="13" fill="#8c8c8c" stroke="#c8602a" stroke-width="2"/><rect x="1010" y="54" width="7" height="3" fill="#c8602a"/><path d="M1003 27 L1014 27 M1013 28 L1013 40 M990.5 38 L990.5 47 L1002 47" fill="none" stroke="rgba(230,120,60,0.7)" stroke-width="1" stroke-dasharray="1.5 1.5"/></svg></div></body></html>
